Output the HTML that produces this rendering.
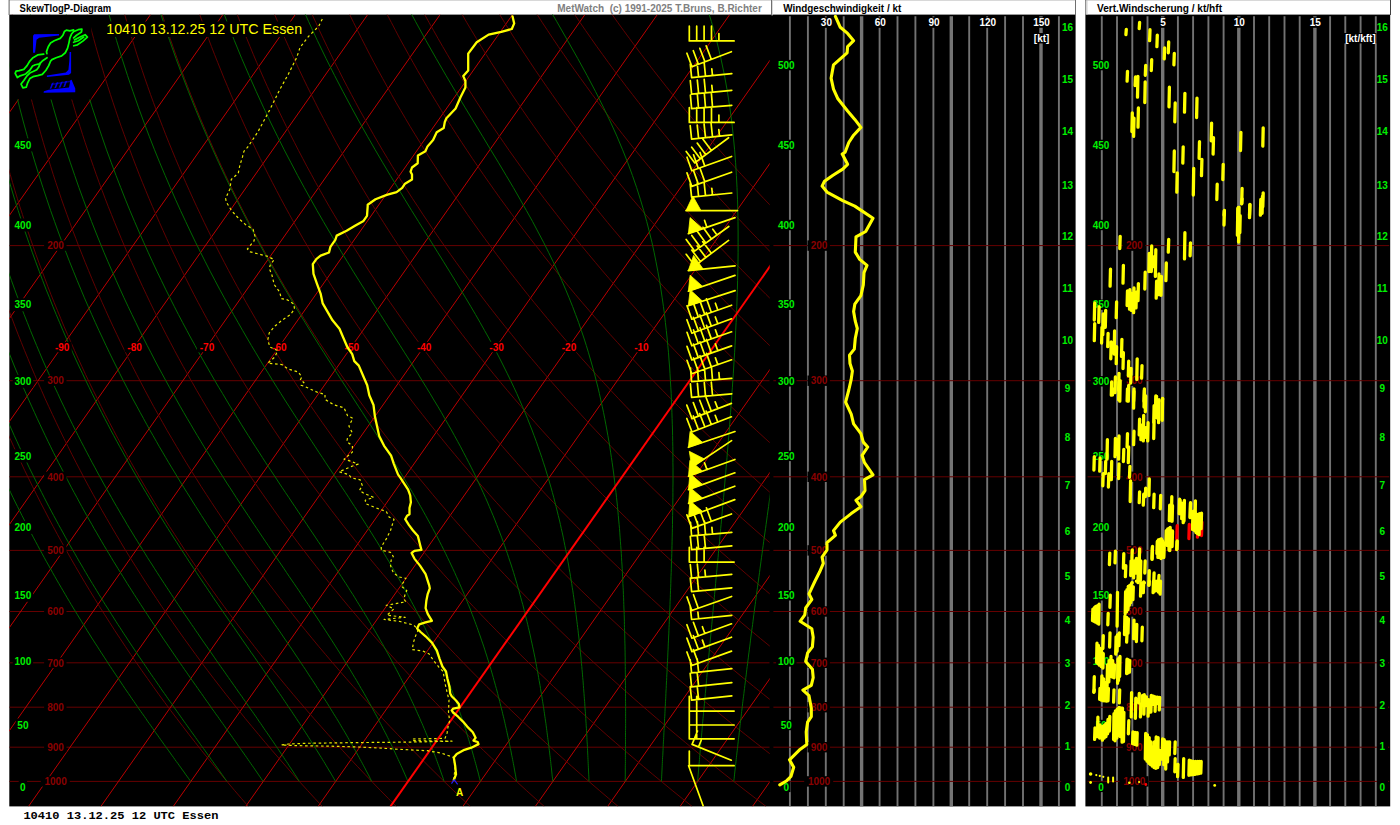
<!DOCTYPE html><html><head><meta charset="utf-8"><title>SkewTlogP-Diagram</title>
<style>html,body{margin:0;padding:0;background:#fff;overflow:hidden}svg{display:block}text{font-family:"Liberation Sans",sans-serif}.b{font-weight:bold}.g{fill:#00f000;font-weight:bold;font-size:10px}.w{fill:#fff;font-weight:bold;font-size:10px}.pl{fill:#8a0000;font-size:10px;font-weight:bold}.tl{fill:#ff0000;font-size:10px;font-weight:bold}.tt{fill:#000;font-weight:bold;font-size:10.2px}</style></head><body>
<svg width="1400" height="825" viewBox="0 0 1400 825">
<rect width="1400" height="825" fill="#fff"/>
<rect x="9.3" y="14.6" width="1066.3" height="791.8" fill="#000"/>
<rect x="1085.4" y="14.6" width="304.8" height="791.8" fill="#000"/>
<rect x="9" y="0" width="1067" height="1" fill="#d8d8d8"/>
<rect x="1085" y="0" width="306" height="1" fill="#d8d8d8"/>
<rect x="8.6" y="0" width="1" height="15" fill="#606060"/>
<rect x="771" y="0" width="1" height="15.4" fill="#707070"/>
<rect x="772" y="0" width="0.8" height="15.4" fill="#d0d0d0"/>
<rect x="1075" y="0" width="1" height="15" fill="#707070"/>
<rect x="1085.3" y="0" width="0.9" height="15" fill="#606060"/>
<rect x="1086.6" y="0" width="0.8" height="15" fill="#c0c0c0"/>
<rect x="1390" y="0" width="1" height="15" fill="#404040"/>
<text class="tt" x="19.6" y="12" textLength="91.5" lengthAdjust="spacingAndGlyphs">SkewTlogP-Diagram</text>
<text x="557.3" y="12" fill="#808080" font-weight="bold" font-size="10" textLength="204.5" lengthAdjust="spacingAndGlyphs">MetWatch&#160;&#160;(c) 1991-2025 T.Bruns, B.Richter</text>
<text class="tt" x="783.2" y="12" textLength="118" lengthAdjust="spacingAndGlyphs">Windgeschwindigkeit / kt</text>
<text class="tt" x="1097" y="12" textLength="125" lengthAdjust="spacingAndGlyphs">Vert.Windscherung / kt/hft</text>
<defs><clipPath id="c1"><path clip-rule="evenodd" d="M9.3 14.6H769.7V806.4H9.3Z M9 14H91.3V99.4H9Z M100 21.5H304V37H100Z"/></clipPath>
<clipPath id="c1b"><rect x="9.3" y="14.6" width="760.4" height="791.8"/></clipPath>
<clipPath id="c2"><rect x="769.7" y="14.6" width="305.9" height="791.8"/></clipPath>
<clipPath id="c3"><rect x="1085.4" y="14.6" width="304.8" height="791.8"/></clipPath></defs>
<g clip-path="url(#c1)" fill="none" stroke-width="1">
<path d="M9.3 245.6H769.7M9.3 380.7H769.7M9.3 476.8H769.7M9.3 550.4H769.7M9.3 611.5H769.7M9.3 662.8H769.7M9.3 707.2H769.7M9.3 747.2H769.7M9.3 781.4H769.7" stroke="#660000"/>
<path d="M-550.7 806.4L5.7 14.6M-478.3 806.4L78.1 14.6M-405.9 806.4L150.5 14.6M-333.5 806.4L222.9 14.6M-261.1 806.4L295.3 14.6M-188.7 806.4L367.7 14.6M-116.3 806.4L440.1 14.6M-43.9 806.4L512.5 14.6M28.5 806.4L584.9 14.6M100.9 806.4L657.3 14.6M173.3 806.4L729.7 14.6M245.7 806.4L802.1 14.6M318.1 806.4L874.5 14.6M462.9 806.4L1019.3 14.6M535.3 806.4L1091.7 14.6M607.7 806.4L1164.1 14.6M680.1 806.4L1236.5 14.6M752.5 806.4L1308.9 14.6" stroke="#bc0000"/>
<path d="M248.3 806.4 L241.4 798.4 L234.5 790.4 L227.8 782.4 L221.1 774.4 L214.5 766.4 L208 758.4 L201.5 750.4 L195.2 742.4 L188.9 734.4 L182.8 726.4 L176.7 718.4 L170.6 710.4 L164.7 702.4 L158.8 694.4 L153.1 686.4 L147.4 678.4 L141.7 670.4 L136.2 662.4 L130.7 654.4 L125.3 646.4 L120 638.4 L114.7 630.4 L109.6 622.4 L104.5 614.4 L99.4 606.4 L94.5 598.4 L89.6 590.4 L84.8 582.4 L80.1 574.4 L75.4 566.4 L70.8 558.4 L66.3 550.4 L61.8 542.4 L57.4 534.4 L53.1 526.4 L48.8 518.4 L44.7 510.4 L40.5 502.4 L36.5 494.4 L32.5 486.4 L28.6 478.4 L24.7 470.4 L21 462.4 L17.2 454.4 L13.6 446.4 L10 438.4 L6.4 430.4 L3 422.4 L-0.4 414.4 L-3.8 406.4 L-7.1 398.4 L-10.3 390.4 L-13.5 382.4 L-16.6 374.4 L-19.6 366.4 L-22.6 358.4 L-25.5 350.4 L-28.4 342.4 L-31.2 334.4 L-34 326.4 L-36.7 318.4 L-39.3 310.4 L-41.9 302.4 L-44.4 294.4 L-46.9 286.4 L-49.3 278.4 L-51.6 270.4 L-53.9 262.4 L-56.2 254.4 L-58.4 246.4 L-60.5 238.4 L-62.6 230.4 L-64.7 222.4 L-66.7 214.4 L-68.6 206.4 L-70.5 198.4 L-72.3 190.4 L-74.1 182.4 L-75.8 174.4 L-77.5 166.4 L-79.1 158.4 L-80.7 150.4 L-82.2 142.4 L-83.7 134.4 L-85.1 126.4 L-86.5 118.4 L-87.8 110.4 L-89.1 102.4 L-90.4 94.4 L-91.6 86.4 L-92.7 78.4 L-93.8 70.4 L-94.9 62.4 L-95.9 54.4 L-96.8 46.4 L-97.8 38.4 L-98.6 30.4 L-99.5 22.4 L-100.3 14.4M322.3 806.4 L314.8 798.4 L307.5 790.4 L300.2 782.4 L293 774.4 L286 766.4 L279 758.4 L272 750.4 L265.2 742.4 L258.5 734.4 L251.8 726.4 L245.2 718.4 L238.8 710.4 L232.4 702.4 L226 694.4 L219.8 686.4 L213.6 678.4 L207.5 670.4 L201.5 662.4 L195.6 654.4 L189.8 646.4 L184 638.4 L178.3 630.4 L172.7 622.4 L167.2 614.4 L161.7 606.4 L156.4 598.4 L151.1 590.4 L145.8 582.4 L140.7 574.4 L135.6 566.4 L130.6 558.4 L125.6 550.4 L120.8 542.4 L116 534.4 L111.3 526.4 L106.6 518.4 L102 510.4 L97.5 502.4 L93.1 494.4 L88.7 486.4 L84.4 478.4 L80.2 470.4 L76 462.4 L71.9 454.4 L67.9 446.4 L63.9 438.4 L60 430.4 L56.2 422.4 L52.4 414.4 L48.7 406.4 L45 398.4 L41.5 390.4 L37.9 382.4 L34.5 374.4 L31.1 366.4 L27.8 358.4 L24.5 350.4 L21.3 342.4 L18.1 334.4 L15 326.4 L12 318.4 L9 310.4 L6.1 302.4 L3.3 294.4 L0.5 286.4 L-2.3 278.4 L-4.9 270.4 L-7.6 262.4 L-10.1 254.4 L-12.6 246.4 L-15.1 238.4 L-17.5 230.4 L-19.9 222.4 L-22.1 214.4 L-24.4 206.4 L-26.6 198.4 L-28.7 190.4 L-30.8 182.4 L-32.8 174.4 L-34.8 166.4 L-36.7 158.4 L-38.6 150.4 L-40.4 142.4 L-42.1 134.4 L-43.9 126.4 L-45.5 118.4 L-47.1 110.4 L-48.7 102.4 L-50.2 94.4 L-51.7 86.4 L-53.1 78.4 L-54.5 70.4 L-55.8 62.4 L-57.1 54.4 L-58.3 46.4 L-59.5 38.4 L-60.6 30.4 L-61.7 22.4 L-62.8 14.4M396.2 806.4 L388.3 798.4 L380.4 790.4 L372.7 782.4 L365 774.4 L357.4 766.4 L349.9 758.4 L342.5 750.4 L335.2 742.4 L328 734.4 L320.9 726.4 L313.8 718.4 L306.9 710.4 L300 702.4 L293.2 694.4 L286.5 686.4 L279.9 678.4 L273.4 670.4 L266.9 662.4 L260.5 654.4 L254.3 646.4 L248.1 638.4 L241.9 630.4 L235.9 622.4 L229.9 614.4 L224 606.4 L218.2 598.4 L212.5 590.4 L206.9 582.4 L201.3 574.4 L195.8 566.4 L190.4 558.4 L185 550.4 L179.8 542.4 L174.6 534.4 L169.4 526.4 L164.4 518.4 L159.4 510.4 L154.5 502.4 L149.7 494.4 L144.9 486.4 L140.2 478.4 L135.6 470.4 L131.1 462.4 L126.6 454.4 L122.2 446.4 L117.8 438.4 L113.6 430.4 L109.4 422.4 L105.2 414.4 L101.2 406.4 L97.2 398.4 L93.2 390.4 L89.3 382.4 L85.5 374.4 L81.8 366.4 L78.1 358.4 L74.5 350.4 L71 342.4 L67.5 334.4 L64 326.4 L60.7 318.4 L57.4 310.4 L54.1 302.4 L50.9 294.4 L47.8 286.4 L44.8 278.4 L41.8 270.4 L38.8 262.4 L35.9 254.4 L33.1 246.4 L30.3 238.4 L27.6 230.4 L25 222.4 L22.4 214.4 L19.8 206.4 L17.3 198.4 L14.9 190.4 L12.5 182.4 L10.2 174.4 L7.9 166.4 L5.7 158.4 L3.6 150.4 L1.5 142.4 L-0.6 134.4 L-2.6 126.4 L-4.5 118.4 L-6.4 110.4 L-8.3 102.4 L-10.1 94.4 L-11.8 86.4 L-13.5 78.4 L-15.2 70.4 L-16.7 62.4 L-18.3 54.4 L-19.8 46.4 L-21.2 38.4 L-22.6 30.4 L-24 22.4 L-25.3 14.4M470.2 806.4 L461.7 798.4 L453.4 790.4 L445.1 782.4 L437 774.4 L428.9 766.4 L420.9 758.4 L413 750.4 L405.2 742.4 L397.5 734.4 L389.9 726.4 L382.4 718.4 L375 710.4 L367.7 702.4 L360.4 694.4 L353.2 686.4 L346.2 678.4 L339.2 670.4 L332.3 662.4 L325.5 654.4 L318.7 646.4 L312.1 638.4 L305.5 630.4 L299 622.4 L292.7 614.4 L286.3 606.4 L280.1 598.4 L274 590.4 L267.9 582.4 L261.9 574.4 L256 566.4 L250.2 558.4 L244.4 550.4 L238.7 542.4 L233.1 534.4 L227.6 526.4 L222.2 518.4 L216.8 510.4 L211.5 502.4 L206.3 494.4 L201.1 486.4 L196.1 478.4 L191.1 470.4 L186.1 462.4 L181.3 454.4 L176.5 446.4 L171.8 438.4 L167.1 430.4 L162.6 422.4 L158.1 414.4 L153.6 406.4 L149.3 398.4 L145 390.4 L140.8 382.4 L136.6 374.4 L132.5 366.4 L128.5 358.4 L124.5 350.4 L120.6 342.4 L116.8 334.4 L113 326.4 L109.3 318.4 L105.7 310.4 L102.1 302.4 L98.6 294.4 L95.2 286.4 L91.8 278.4 L88.5 270.4 L85.2 262.4 L82 254.4 L78.8 246.4 L75.8 238.4 L72.7 230.4 L69.8 222.4 L66.9 214.4 L64 206.4 L61.2 198.4 L58.5 190.4 L55.8 182.4 L53.2 174.4 L50.7 166.4 L48.2 158.4 L45.7 150.4 L43.3 142.4 L41 134.4 L38.7 126.4 L36.5 118.4 L34.3 110.4 L32.2 102.4 L30.1 94.4 L28.1 86.4 L26.1 78.4 L24.2 70.4 L22.3 62.4 L20.5 54.4 L18.8 46.4 L17 38.4 L15.4 30.4 L13.8 22.4 L12.2 14.4M544.2 806.4 L535.2 798.4 L526.3 790.4 L517.6 782.4 L508.9 774.4 L500.4 766.4 L491.9 758.4 L483.5 750.4 L475.3 742.4 L467.1 734.4 L459 726.4 L451 718.4 L443.1 710.4 L435.3 702.4 L427.6 694.4 L420 686.4 L412.4 678.4 L405 670.4 L397.6 662.4 L390.4 654.4 L383.2 646.4 L376.1 638.4 L369.1 630.4 L362.2 622.4 L355.4 614.4 L348.6 606.4 L342 598.4 L335.4 590.4 L328.9 582.4 L322.5 574.4 L316.2 566.4 L309.9 558.4 L303.8 550.4 L297.7 542.4 L291.7 534.4 L285.8 526.4 L279.9 518.4 L274.2 510.4 L268.5 502.4 L262.9 494.4 L257.3 486.4 L251.9 478.4 L246.5 470.4 L241.2 462.4 L236 454.4 L230.8 446.4 L225.7 438.4 L220.7 430.4 L215.8 422.4 L210.9 414.4 L206.1 406.4 L201.4 398.4 L196.7 390.4 L192.2 382.4 L187.7 374.4 L183.2 366.4 L178.8 358.4 L174.5 350.4 L170.3 342.4 L166.1 334.4 L162 326.4 L158 318.4 L154 310.4 L150.1 302.4 L146.3 294.4 L142.5 286.4 L138.8 278.4 L135.2 270.4 L131.6 262.4 L128 254.4 L124.6 246.4 L121.2 238.4 L117.9 230.4 L114.6 222.4 L111.4 214.4 L108.2 206.4 L105.1 198.4 L102.1 190.4 L99.1 182.4 L96.2 174.4 L93.4 166.4 L90.6 158.4 L87.8 150.4 L85.1 142.4 L82.5 134.4 L80 126.4 L77.4 118.4 L75 110.4 L72.6 102.4 L70.2 94.4 L67.9 86.4 L65.7 78.4 L63.5 70.4 L61.4 62.4 L59.3 54.4 L57.3 46.4 L55.3 38.4 L53.4 30.4 L51.5 22.4 L49.7 14.4M618.1 806.4 L608.7 798.4 L599.3 790.4 L590 782.4 L580.9 774.4 L571.8 766.4 L562.9 758.4 L554 750.4 L545.3 742.4 L536.6 734.4 L528 726.4 L519.6 718.4 L511.2 710.4 L503 702.4 L494.8 694.4 L486.7 686.4 L478.7 678.4 L470.8 670.4 L463 662.4 L455.3 654.4 L447.7 646.4 L440.2 638.4 L432.7 630.4 L425.4 622.4 L418.1 614.4 L410.9 606.4 L403.9 598.4 L396.9 590.4 L389.9 582.4 L383.1 574.4 L376.4 566.4 L369.7 558.4 L363.2 550.4 L356.7 542.4 L350.3 534.4 L343.9 526.4 L337.7 518.4 L331.5 510.4 L325.5 502.4 L319.5 494.4 L313.5 486.4 L307.7 478.4 L301.9 470.4 L296.3 462.4 L290.6 454.4 L285.1 446.4 L279.7 438.4 L274.3 430.4 L269 422.4 L263.8 414.4 L258.6 406.4 L253.5 398.4 L248.5 390.4 L243.6 382.4 L238.7 374.4 L233.9 366.4 L229.2 358.4 L224.6 350.4 L220 342.4 L215.5 334.4 L211 326.4 L206.7 318.4 L202.4 310.4 L198.1 302.4 L193.9 294.4 L189.8 286.4 L185.8 278.4 L181.8 270.4 L177.9 262.4 L174.1 254.4 L170.3 246.4 L166.6 238.4 L163 230.4 L159.4 222.4 L155.9 214.4 L152.4 206.4 L149 198.4 L145.7 190.4 L142.4 182.4 L139.2 174.4 L136.1 166.4 L133 158.4 L130 150.4 L127 142.4 L124.1 134.4 L121.2 126.4 L118.4 118.4 L115.7 110.4 L113 102.4 L110.4 94.4 L107.8 86.4 L105.3 78.4 L102.9 70.4 L100.5 62.4 L98.1 54.4 L95.8 46.4 L93.6 38.4 L91.4 30.4 L89.3 22.4 L87.2 14.4M692.1 806.4 L682.1 798.4 L672.2 790.4 L662.5 782.4 L652.8 774.4 L643.3 766.4 L633.9 758.4 L624.5 750.4 L615.3 742.4 L606.1 734.4 L597.1 726.4 L588.2 718.4 L579.3 710.4 L570.6 702.4 L562 694.4 L553.4 686.4 L545 678.4 L536.6 670.4 L528.4 662.4 L520.2 654.4 L512.2 646.4 L504.2 638.4 L496.3 630.4 L488.5 622.4 L480.8 614.4 L473.2 606.4 L465.7 598.4 L458.3 590.4 L451 582.4 L443.7 574.4 L436.6 566.4 L429.5 558.4 L422.5 550.4 L415.6 542.4 L408.8 534.4 L402.1 526.4 L395.5 518.4 L388.9 510.4 L382.4 502.4 L376.1 494.4 L369.7 486.4 L363.5 478.4 L357.4 470.4 L351.3 462.4 L345.3 454.4 L339.4 446.4 L333.6 438.4 L327.9 430.4 L322.2 422.4 L316.6 414.4 L311.1 406.4 L305.6 398.4 L300.3 390.4 L295 382.4 L289.8 374.4 L284.6 366.4 L279.6 358.4 L274.6 350.4 L269.6 342.4 L264.8 334.4 L260 326.4 L255.3 318.4 L250.7 310.4 L246.1 302.4 L241.6 294.4 L237.2 286.4 L232.8 278.4 L228.5 270.4 L224.3 262.4 L220.2 254.4 L216.1 246.4 L212.1 238.4 L208.1 230.4 L204.2 222.4 L200.4 214.4 L196.6 206.4 L192.9 198.4 L189.3 190.4 L185.7 182.4 L182.2 174.4 L178.8 166.4 L175.4 158.4 L172.1 150.4 L168.8 142.4 L165.6 134.4 L162.5 126.4 L159.4 118.4 L156.4 110.4 L153.4 102.4 L150.5 94.4 L147.7 86.4 L144.9 78.4 L142.2 70.4 L139.5 62.4 L136.9 54.4 L134.4 46.4 L131.9 38.4 L129.4 30.4 L127 22.4 L124.7 14.4M766 806.4 L755.6 798.4 L745.2 790.4 L734.9 782.4 L724.8 774.4 L714.8 766.4 L704.8 758.4 L695 750.4 L685.3 742.4 L675.7 734.4 L666.2 726.4 L656.8 718.4 L647.5 710.4 L638.3 702.4 L629.2 694.4 L620.2 686.4 L611.3 678.4 L602.5 670.4 L593.7 662.4 L585.1 654.4 L576.6 646.4 L568.2 638.4 L559.9 630.4 L551.7 622.4 L543.6 614.4 L535.5 606.4 L527.6 598.4 L519.8 590.4 L512 582.4 L504.4 574.4 L496.8 566.4 L489.3 558.4 L481.9 550.4 L474.6 542.4 L467.4 534.4 L460.3 526.4 L453.2 518.4 L446.3 510.4 L439.4 502.4 L432.6 494.4 L426 486.4 L419.3 478.4 L412.8 470.4 L406.4 462.4 L400 454.4 L393.7 446.4 L387.5 438.4 L381.4 430.4 L375.4 422.4 L369.4 414.4 L363.6 406.4 L357.8 398.4 L352 390.4 L346.4 382.4 L340.8 374.4 L335.3 366.4 L329.9 358.4 L324.6 350.4 L319.3 342.4 L314.1 334.4 L309 326.4 L304 318.4 L299 310.4 L294.1 302.4 L289.3 294.4 L284.5 286.4 L279.9 278.4 L275.2 270.4 L270.7 262.4 L266.2 254.4 L261.8 246.4 L257.5 238.4 L253.2 230.4 L249 222.4 L244.9 214.4 L240.8 206.4 L236.8 198.4 L232.9 190.4 L229 182.4 L225.2 174.4 L221.5 166.4 L217.8 158.4 L214.2 150.4 L210.7 142.4 L207.2 134.4 L203.8 126.4 L200.4 118.4 L197.1 110.4 L193.9 102.4 L190.7 94.4 L187.6 86.4 L184.5 78.4 L181.5 70.4 L178.6 62.4 L175.7 54.4 L172.9 46.4 L170.1 38.4 L167.4 30.4 L164.8 22.4 L162.2 14.4M840 806.4 L829 798.4 L818.2 790.4 L807.4 782.4 L796.8 774.4 L786.2 766.4 L775.8 758.4 L765.5 750.4 L755.3 742.4 L745.2 734.4 L735.2 726.4 L725.3 718.4 L715.6 710.4 L705.9 702.4 L696.3 694.4 L686.9 686.4 L677.5 678.4 L668.3 670.4 L659.1 662.4 L650.1 654.4 L641.1 646.4 L632.3 638.4 L623.5 630.4 L614.9 622.4 L606.3 614.4 L597.8 606.4 L589.5 598.4 L581.2 590.4 L573 582.4 L565 574.4 L557 566.4 L549.1 558.4 L541.3 550.4 L533.6 542.4 L526 534.4 L518.4 526.4 L511 518.4 L503.7 510.4 L496.4 502.4 L489.2 494.4 L482.2 486.4 L475.2 478.4 L468.3 470.4 L461.4 462.4 L454.7 454.4 L448 446.4 L441.5 438.4 L435 430.4 L428.6 422.4 L422.3 414.4 L416 406.4 L409.9 398.4 L403.8 390.4 L397.8 382.4 L391.9 374.4 L386 366.4 L380.3 358.4 L374.6 350.4 L369 342.4 L363.5 334.4 L358 326.4 L352.6 318.4 L347.3 310.4 L342.1 302.4 L337 294.4 L331.9 286.4 L326.9 278.4 L321.9 270.4 L317.1 262.4 L312.3 254.4 L307.6 246.4 L302.9 238.4 L298.4 230.4 L293.8 222.4 L289.4 214.4 L285 206.4 L280.7 198.4 L276.5 190.4 L272.3 182.4 L268.2 174.4 L264.2 166.4 L260.2 158.4 L256.3 150.4 L252.5 142.4 L248.7 134.4 L245 126.4 L241.4 118.4 L237.8 110.4 L234.3 102.4 L230.8 94.4 L227.5 86.4 L224.1 78.4 L220.9 70.4 L217.7 62.4 L214.5 54.4 L211.4 46.4 L208.4 38.4 L205.4 30.4 L202.5 22.4 L199.7 14.4M914 806.4 L902.5 798.4 L891.1 790.4 L879.9 782.4 L868.7 774.4 L857.7 766.4 L846.8 758.4 L836 750.4 L825.3 742.4 L814.7 734.4 L804.3 726.4 L793.9 718.4 L783.7 710.4 L773.5 702.4 L763.5 694.4 L753.6 686.4 L743.8 678.4 L734.1 670.4 L724.5 662.4 L715 654.4 L705.6 646.4 L696.3 638.4 L687.1 630.4 L678 622.4 L669 614.4 L660.1 606.4 L651.4 598.4 L642.7 590.4 L634.1 582.4 L625.6 574.4 L617.2 566.4 L608.9 558.4 L600.7 550.4 L592.6 542.4 L584.5 534.4 L576.6 526.4 L568.8 518.4 L561 510.4 L553.4 502.4 L545.8 494.4 L538.4 486.4 L531 478.4 L523.7 470.4 L516.5 462.4 L509.4 454.4 L502.4 446.4 L495.4 438.4 L488.6 430.4 L481.8 422.4 L475.1 414.4 L468.5 406.4 L462 398.4 L455.6 390.4 L449.2 382.4 L442.9 374.4 L436.7 366.4 L430.6 358.4 L424.6 350.4 L418.7 342.4 L412.8 334.4 L407 326.4 L401.3 318.4 L395.7 310.4 L390.1 302.4 L384.6 294.4 L379.2 286.4 L373.9 278.4 L368.6 270.4 L363.5 262.4 L358.4 254.4 L353.3 246.4 L348.4 238.4 L343.5 230.4 L338.7 222.4 L333.9 214.4 L329.2 206.4 L324.6 198.4 L320.1 190.4 L315.6 182.4 L311.3 174.4 L306.9 166.4 L302.7 158.4 L298.5 150.4 L294.4 142.4 L290.3 134.4 L286.3 126.4 L282.4 118.4 L278.5 110.4 L274.7 102.4 L271 94.4 L267.3 86.4 L263.7 78.4 L260.2 70.4 L256.7 62.4 L253.3 54.4 L250 46.4 L246.7 38.4 L243.4 30.4 L240.3 22.4 L237.2 14.4M987.9 806.4 L975.9 798.4 L964.1 790.4 L952.3 782.4 L940.7 774.4 L929.2 766.4 L917.8 758.4 L906.5 750.4 L895.3 742.4 L884.3 734.4 L873.3 726.4 L862.5 718.4 L851.8 710.4 L841.2 702.4 L830.7 694.4 L820.3 686.4 L810.1 678.4 L799.9 670.4 L789.9 662.4 L779.9 654.4 L770.1 646.4 L760.3 638.4 L750.7 630.4 L741.2 622.4 L731.8 614.4 L722.4 606.4 L713.2 598.4 L704.1 590.4 L695.1 582.4 L686.2 574.4 L677.4 566.4 L668.7 558.4 L660.1 550.4 L651.5 542.4 L643.1 534.4 L634.8 526.4 L626.6 518.4 L618.4 510.4 L610.4 502.4 L602.4 494.4 L594.6 486.4 L586.8 478.4 L579.1 470.4 L571.6 462.4 L564.1 454.4 L556.7 446.4 L549.4 438.4 L542.1 430.4 L535 422.4 L527.9 414.4 L521 406.4 L514.1 398.4 L507.3 390.4 L500.6 382.4 L494 374.4 L487.5 366.4 L481 358.4 L474.6 350.4 L468.3 342.4 L462.1 334.4 L456 326.4 L450 318.4 L444 310.4 L438.1 302.4 L432.3 294.4 L426.6 286.4 L420.9 278.4 L415.3 270.4 L409.8 262.4 L404.4 254.4 L399.1 246.4 L393.8 238.4 L388.6 230.4 L383.5 222.4 L378.4 214.4 L373.4 206.4 L368.5 198.4 L363.7 190.4 L358.9 182.4 L354.3 174.4 L349.6 166.4 L345.1 158.4 L340.6 150.4 L336.2 142.4 L331.9 134.4 L327.6 126.4 L323.4 118.4 L319.2 110.4 L315.2 102.4 L311.2 94.4 L307.2 86.4 L303.3 78.4 L299.5 70.4 L295.8 62.4 L292.1 54.4 L288.5 46.4 L284.9 38.4 L281.4 30.4 L278 22.4 L274.6 14.4M1061.9 806.4 L1049.4 798.4 L1037 790.4 L1024.8 782.4 L1012.6 774.4 L1000.6 766.4 L988.7 758.4 L977 750.4 L965.3 742.4 L953.8 734.4 L942.4 726.4 L931.1 718.4 L919.9 710.4 L908.8 702.4 L897.9 694.4 L887.1 686.4 L876.3 678.4 L865.7 670.4 L855.2 662.4 L844.8 654.4 L834.5 646.4 L824.4 638.4 L814.3 630.4 L804.3 622.4 L794.5 614.4 L784.7 606.4 L775.1 598.4 L765.6 590.4 L756.1 582.4 L746.8 574.4 L737.6 566.4 L728.5 558.4 L719.4 550.4 L710.5 542.4 L701.7 534.4 L693 526.4 L684.3 518.4 L675.8 510.4 L667.4 502.4 L659 494.4 L650.8 486.4 L642.6 478.4 L634.6 470.4 L626.6 462.4 L618.7 454.4 L611 446.4 L603.3 438.4 L595.7 430.4 L588.2 422.4 L580.8 414.4 L573.5 406.4 L566.2 398.4 L559.1 390.4 L552 382.4 L545 374.4 L538.2 366.4 L531.4 358.4 L524.6 350.4 L518 342.4 L511.5 334.4 L505 326.4 L498.6 318.4 L492.3 310.4 L486.1 302.4 L480 294.4 L473.9 286.4 L467.9 278.4 L462 270.4 L456.2 262.4 L450.5 254.4 L444.8 246.4 L439.2 238.4 L433.7 230.4 L428.3 222.4 L422.9 214.4 L417.7 206.4 L412.4 198.4 L407.3 190.4 L402.3 182.4 L397.3 174.4 L392.3 166.4 L387.5 158.4 L382.7 150.4 L378 142.4 L373.4 134.4 L368.9 126.4 L364.4 118.4 L359.9 110.4 L355.6 102.4 L351.3 94.4 L347.1 86.4 L342.9 78.4 L338.9 70.4 L334.8 62.4 L330.9 54.4 L327 46.4 L323.2 38.4 L319.4 30.4 L315.8 22.4 L312.1 14.4M1135.9 806.4 L1122.9 798.4 L1110 790.4 L1097.2 782.4 L1084.6 774.4 L1072.1 766.4 L1059.7 758.4 L1047.5 750.4 L1035.3 742.4 L1023.3 734.4 L1011.4 726.4 L999.7 718.4 L988 710.4 L976.5 702.4 L965.1 694.4 L953.8 686.4 L942.6 678.4 L931.5 670.4 L920.6 662.4 L909.7 654.4 L899 646.4 L888.4 638.4 L877.9 630.4 L867.5 622.4 L857.2 614.4 L847 606.4 L837 598.4 L827 590.4 L817.2 582.4 L807.4 574.4 L797.8 566.4 L788.2 558.4 L778.8 550.4 L769.5 542.4 L760.2 534.4 L751.1 526.4 L742.1 518.4 L733.2 510.4 L724.3 502.4 L715.6 494.4 L707 486.4 L698.5 478.4 L690 470.4 L681.7 462.4 L673.4 454.4 L665.3 446.4 L657.2 438.4 L649.3 430.4 L641.4 422.4 L633.6 414.4 L625.9 406.4 L618.3 398.4 L610.8 390.4 L603.4 382.4 L596.1 374.4 L588.9 366.4 L581.7 358.4 L574.7 350.4 L567.7 342.4 L560.8 334.4 L554 326.4 L547.3 318.4 L540.7 310.4 L534.1 302.4 L527.6 294.4 L521.3 286.4 L515 278.4 L508.7 270.4 L502.6 262.4 L496.5 254.4 L490.6 246.4 L484.7 238.4 L478.8 230.4 L473.1 222.4 L467.4 214.4 L461.9 206.4 L456.3 198.4 L450.9 190.4 L445.6 182.4 L440.3 174.4 L435.1 166.4 L429.9 158.4 L424.9 150.4 L419.9 142.4 L415 134.4 L410.1 126.4 L405.4 118.4 L400.7 110.4 L396 102.4 L391.5 94.4 L387 86.4 L382.6 78.4 L378.2 70.4 L373.9 62.4 L369.7 54.4 L365.6 46.4 L361.5 38.4 L357.5 30.4 L353.5 22.4 L349.6 14.4M1209.8 806.4 L1196.3 798.4 L1182.9 790.4 L1169.7 782.4 L1156.6 774.4 L1143.6 766.4 L1130.7 758.4 L1118 750.4 L1105.4 742.4 L1092.9 734.4 L1080.5 726.4 L1068.3 718.4 L1056.1 710.4 L1044.1 702.4 L1032.3 694.4 L1020.5 686.4 L1008.9 678.4 L997.4 670.4 L986 662.4 L974.7 654.4 L963.5 646.4 L952.4 638.4 L941.5 630.4 L930.7 622.4 L920 614.4 L909.3 606.4 L898.9 598.4 L888.5 590.4 L878.2 582.4 L868 574.4 L858 566.4 L848 558.4 L838.2 550.4 L828.4 542.4 L818.8 534.4 L809.3 526.4 L799.9 518.4 L790.5 510.4 L781.3 502.4 L772.2 494.4 L763.2 486.4 L754.3 478.4 L745.5 470.4 L736.7 462.4 L728.1 454.4 L719.6 446.4 L711.2 438.4 L702.8 430.4 L694.6 422.4 L686.5 414.4 L678.4 406.4 L670.5 398.4 L662.6 390.4 L654.8 382.4 L647.2 374.4 L639.6 366.4 L632.1 358.4 L624.7 350.4 L617.4 342.4 L610.1 334.4 L603 326.4 L595.9 318.4 L589 310.4 L582.1 302.4 L575.3 294.4 L568.6 286.4 L562 278.4 L555.4 270.4 L549 262.4 L542.6 254.4 L536.3 246.4 L530.1 238.4 L524 230.4 L517.9 222.4 L511.9 214.4 L506.1 206.4 L500.2 198.4 L494.5 190.4 L488.9 182.4 L483.3 174.4 L477.8 166.4 L472.3 158.4 L467 150.4 L461.7 142.4 L456.5 134.4 L451.4 126.4 L446.3 118.4 L441.4 110.4 L436.5 102.4 L431.6 94.4 L426.8 86.4 L422.2 78.4 L417.5 70.4 L413 62.4 L408.5 54.4 L404.1 46.4 L399.7 38.4 L395.5 30.4 L391.3 22.4 L387.1 14.4M1283.8 806.4 L1269.8 798.4 L1255.9 790.4 L1242.1 782.4 L1228.5 774.4 L1215 766.4 L1201.7 758.4 L1188.5 750.4 L1175.4 742.4 L1162.4 734.4 L1149.6 726.4 L1136.8 718.4 L1124.3 710.4 L1111.8 702.4 L1099.5 694.4 L1087.2 686.4 L1075.1 678.4 L1063.2 670.4 L1051.3 662.4 L1039.6 654.4 L1028 646.4 L1016.5 638.4 L1005.1 630.4 L993.8 622.4 L982.7 614.4 L971.7 606.4 L960.7 598.4 L949.9 590.4 L939.2 582.4 L928.6 574.4 L918.2 566.4 L907.8 558.4 L897.6 550.4 L887.4 542.4 L877.4 534.4 L867.5 526.4 L857.6 518.4 L847.9 510.4 L838.3 502.4 L828.8 494.4 L819.4 486.4 L810.1 478.4 L800.9 470.4 L791.8 462.4 L782.8 454.4 L773.9 446.4 L765.1 438.4 L756.4 430.4 L747.8 422.4 L739.3 414.4 L730.9 406.4 L722.6 398.4 L714.4 390.4 L706.2 382.4 L698.2 374.4 L690.3 366.4 L682.4 358.4 L674.7 350.4 L667 342.4 L659.5 334.4 L652 326.4 L644.6 318.4 L637.3 310.4 L630.1 302.4 L623 294.4 L615.9 286.4 L609 278.4 L602.1 270.4 L595.4 262.4 L588.7 254.4 L582.1 246.4 L575.5 238.4 L569.1 230.4 L562.7 222.4 L556.5 214.4 L550.3 206.4 L544.1 198.4 L538.1 190.4 L532.2 182.4 L526.3 174.4 L520.5 166.4 L514.8 158.4 L509.1 150.4 L503.6 142.4 L498.1 134.4 L492.7 126.4 L487.3 118.4 L482.1 110.4 L476.9 102.4 L471.8 94.4 L466.7 86.4 L461.8 78.4 L456.9 70.4 L452 62.4 L447.3 54.4 L442.6 46.4 L438 38.4 L433.5 30.4 L429 22.4 L424.6 14.4M1357.7 806.4 L1343.2 798.4 L1328.8 790.4 L1314.6 782.4 L1300.5 774.4 L1286.5 766.4 L1272.7 758.4 L1259 750.4 L1245.4 742.4 L1231.9 734.4 L1218.6 726.4 L1205.4 718.4 L1192.4 710.4 L1179.4 702.4 L1166.6 694.4 L1154 686.4 L1141.4 678.4 L1129 670.4 L1116.7 662.4 L1104.5 654.4 L1092.4 646.4 L1080.5 638.4 L1068.7 630.4 L1057 622.4 L1045.4 614.4 L1034 606.4 L1022.6 598.4 L1011.4 590.4 L1000.3 582.4 L989.3 574.4 L978.4 566.4 L967.6 558.4 L956.9 550.4 L946.4 542.4 L936 534.4 L925.6 526.4 L915.4 518.4 L905.3 510.4 L895.3 502.4 L885.4 494.4 L875.6 486.4 L865.9 478.4 L856.3 470.4 L846.9 462.4 L837.5 454.4 L828.2 446.4 L819 438.4 L810 430.4 L801 422.4 L792.1 414.4 L783.4 406.4 L774.7 398.4 L766.1 390.4 L757.7 382.4 L749.3 374.4 L741 366.4 L732.8 358.4 L724.7 350.4 L716.7 342.4 L708.8 334.4 L701 326.4 L693.3 318.4 L685.6 310.4 L678.1 302.4 L670.6 294.4 L663.3 286.4 L656 278.4 L648.8 270.4 L641.7 262.4 L634.7 254.4 L627.8 246.4 L621 238.4 L614.2 230.4 L607.5 222.4 L601 214.4 L594.5 206.4 L588 198.4 L581.7 190.4 L575.5 182.4 L569.3 174.4 L563.2 166.4 L557.2 158.4 L551.3 150.4 L545.4 142.4 L539.6 134.4 L533.9 126.4 L528.3 118.4 L522.8 110.4 L517.3 102.4 L511.9 94.4 L506.6 86.4 L501.4 78.4 L496.2 70.4 L491.1 62.4 L486.1 54.4 L481.1 46.4 L476.3 38.4 L471.5 30.4 L466.7 22.4 L462.1 14.4M1431.7 806.4 L1416.7 798.4 L1401.8 790.4 L1387.1 782.4 L1372.4 774.4 L1358 766.4 L1343.6 758.4 L1329.4 750.4 L1315.4 742.4 L1301.5 734.4 L1287.7 726.4 L1274 718.4 L1260.5 710.4 L1247.1 702.4 L1233.8 694.4 L1220.7 686.4 L1207.7 678.4 L1194.8 670.4 L1182.1 662.4 L1169.4 654.4 L1156.9 646.4 L1144.5 638.4 L1132.3 630.4 L1120.2 622.4 L1108.1 614.4 L1096.3 606.4 L1084.5 598.4 L1072.8 590.4 L1061.3 582.4 L1049.9 574.4 L1038.6 566.4 L1027.4 558.4 L1016.3 550.4 L1005.4 542.4 L994.5 534.4 L983.8 526.4 L973.2 518.4 L962.7 510.4 L952.3 502.4 L942 494.4 L931.8 486.4 L921.7 478.4 L911.8 470.4 L901.9 462.4 L892.2 454.4 L882.5 446.4 L873 438.4 L863.5 430.4 L854.2 422.4 L845 414.4 L835.8 406.4 L826.8 398.4 L817.9 390.4 L809.1 382.4 L800.3 374.4 L791.7 366.4 L783.2 358.4 L774.7 350.4 L766.4 342.4 L758.1 334.4 L750 326.4 L741.9 318.4 L734 310.4 L726.1 302.4 L718.3 294.4 L710.6 286.4 L703 278.4 L695.5 270.4 L688.1 262.4 L680.8 254.4 L673.5 246.4 L666.4 238.4 L659.3 230.4 L652.4 222.4 L645.5 214.4 L638.7 206.4 L631.9 198.4 L625.3 190.4 L618.8 182.4 L612.3 174.4 L605.9 166.4 L599.6 158.4 L593.4 150.4 L587.2 142.4 L581.2 134.4 L575.2 126.4 L569.3 118.4 L563.5 110.4 L557.7 102.4 L552.1 94.4 L546.5 86.4 L541 78.4 L535.5 70.4 L530.2 62.4 L524.9 54.4 L519.7 46.4 L514.5 38.4 L509.5 30.4 L504.5 22.4 L499.6 14.4M1505.7 806.4 L1490.1 798.4 L1474.8 790.4 L1459.5 782.4 L1444.4 774.4 L1429.4 766.4 L1414.6 758.4 L1399.9 750.4 L1385.4 742.4 L1371 734.4 L1356.7 726.4 L1342.6 718.4 L1328.6 710.4 L1314.7 702.4 L1301 694.4 L1287.4 686.4 L1274 678.4 L1260.6 670.4 L1247.4 662.4 L1234.3 654.4 L1221.4 646.4 L1208.6 638.4 L1195.9 630.4 L1183.3 622.4 L1170.9 614.4 L1158.6 606.4 L1146.4 598.4 L1134.3 590.4 L1122.3 582.4 L1110.5 574.4 L1098.8 566.4 L1087.2 558.4 L1075.7 550.4 L1064.3 542.4 L1053.1 534.4 L1042 526.4 L1030.9 518.4 L1020 510.4 L1009.3 502.4 L998.6 494.4 L988 486.4 L977.6 478.4 L967.2 470.4 L957 462.4 L946.9 454.4 L936.8 446.4 L926.9 438.4 L917.1 430.4 L907.4 422.4 L897.8 414.4 L888.3 406.4 L878.9 398.4 L869.7 390.4 L860.5 382.4 L851.4 374.4 L842.4 366.4 L833.5 358.4 L824.7 350.4 L816.1 342.4 L807.5 334.4 L799 326.4 L790.6 318.4 L782.3 310.4 L774.1 302.4 L766 294.4 L758 286.4 L750.1 278.4 L742.2 270.4 L734.5 262.4 L726.8 254.4 L719.3 246.4 L711.8 238.4 L704.5 230.4 L697.2 222.4 L690 214.4 L682.9 206.4 L675.8 198.4 L668.9 190.4 L662.1 182.4 L655.3 174.4 L648.6 166.4 L642 158.4 L635.5 150.4 L629.1 142.4 L622.7 134.4 L616.5 126.4 L610.3 118.4 L604.2 110.4 L598.2 102.4 L592.2 94.4 L586.4 86.4 L580.6 78.4 L574.9 70.4 L569.2 62.4 L563.7 54.4 L558.2 46.4 L552.8 38.4 L547.5 30.4 L542.2 22.4 L537.1 14.4M1579.6 806.4 L1563.6 798.4 L1547.7 790.4 L1532 782.4 L1516.4 774.4 L1500.9 766.4 L1485.6 758.4 L1470.4 750.4 L1455.4 742.4 L1440.5 734.4 L1425.8 726.4 L1411.2 718.4 L1396.7 710.4 L1382.4 702.4 L1368.2 694.4 L1354.2 686.4 L1340.2 678.4 L1326.4 670.4 L1312.8 662.4 L1299.3 654.4 L1285.9 646.4 L1272.6 638.4 L1259.5 630.4 L1246.5 622.4 L1233.6 614.4 L1220.9 606.4 L1208.2 598.4 L1195.7 590.4 L1183.4 582.4 L1171.1 574.4 L1159 566.4 L1147 558.4 L1135.1 550.4 L1123.3 542.4 L1111.7 534.4 L1100.1 526.4 L1088.7 518.4 L1077.4 510.4 L1066.2 502.4 L1055.2 494.4 L1044.2 486.4 L1033.4 478.4 L1022.7 470.4 L1012 462.4 L1001.5 454.4 L991.1 446.4 L980.9 438.4 L970.7 430.4 L960.6 422.4 L950.7 414.4 L940.8 406.4 L931.1 398.4 L921.4 390.4 L911.9 382.4 L902.4 374.4 L893.1 366.4 L883.9 358.4 L874.8 350.4 L865.7 342.4 L856.8 334.4 L848 326.4 L839.3 318.4 L830.6 310.4 L822.1 302.4 L813.7 294.4 L805.3 286.4 L797.1 278.4 L788.9 270.4 L780.9 262.4 L772.9 254.4 L765 246.4 L757.3 238.4 L749.6 230.4 L742 222.4 L734.5 214.4 L727.1 206.4 L719.7 198.4 L712.5 190.4 L705.4 182.4 L698.3 174.4 L691.3 166.4 L684.4 158.4 L677.6 150.4 L670.9 142.4 L664.3 134.4 L657.7 126.4 L651.3 118.4 L644.9 110.4 L638.6 102.4 L632.4 94.4 L626.2 86.4 L620.2 78.4 L614.2 70.4 L608.3 62.4 L602.5 54.4 L596.7 46.4 L591.1 38.4 L585.5 30.4 L580 22.4 L574.6 14.4M1653.6 806.4 L1637.1 798.4 L1620.7 790.4 L1604.4 782.4 L1588.3 774.4 L1572.4 766.4 L1556.6 758.4 L1540.9 750.4 L1525.4 742.4 L1510.1 734.4 L1494.8 726.4 L1479.8 718.4 L1464.8 710.4 L1450 702.4 L1435.4 694.4 L1420.9 686.4 L1406.5 678.4 L1392.3 670.4 L1378.2 662.4 L1364.2 654.4 L1350.4 646.4 L1336.7 638.4 L1323.1 630.4 L1309.6 622.4 L1296.3 614.4 L1283.2 606.4 L1270.1 598.4 L1257.2 590.4 L1244.4 582.4 L1231.7 574.4 L1219.2 566.4 L1206.8 558.4 L1194.5 550.4 L1182.3 542.4 L1170.2 534.4 L1158.3 526.4 L1146.5 518.4 L1134.8 510.4 L1123.2 502.4 L1111.8 494.4 L1100.4 486.4 L1089.2 478.4 L1078.1 470.4 L1067.1 462.4 L1056.2 454.4 L1045.5 446.4 L1034.8 438.4 L1024.3 430.4 L1013.8 422.4 L1003.5 414.4 L993.3 406.4 L983.2 398.4 L973.2 390.4 L963.3 382.4 L953.5 374.4 L943.8 366.4 L934.2 358.4 L924.8 350.4 L915.4 342.4 L906.1 334.4 L897 326.4 L887.9 318.4 L879 310.4 L870.1 302.4 L861.3 294.4 L852.7 286.4 L844.1 278.4 L835.6 270.4 L827.2 262.4 L819 254.4 L810.8 246.4 L802.7 238.4 L794.7 230.4 L786.8 222.4 L779 214.4 L771.3 206.4 L763.6 198.4 L756.1 190.4 L748.7 182.4 L741.3 174.4 L734 166.4 L726.9 158.4 L719.8 150.4 L712.8 142.4 L705.9 134.4 L699 126.4 L692.3 118.4 L685.6 110.4 L679 102.4 L672.5 94.4 L666.1 86.4 L659.8 78.4 L653.5 70.4 L647.4 62.4 L641.3 54.4 L635.3 46.4 L629.4 38.4 L623.5 30.4 L617.7 22.4 L612 14.4" stroke="#6a0000" stroke-width="0.9"/>
<path d="M190.8 781.5 L189.8 780.2 L188.4 778.2 L186.9 776.1 L185.4 774.1 L184 772 L182.5 770 L181 767.9 L179.5 765.8 L178 763.7 L176.4 761.6 L174.9 759.5 L173.4 757.3 L171.8 755.2 L170.3 753 L168.7 750.8 L167.1 748.6 L165.5 746.4 L163.9 744.2 L162.3 741.9 L160.7 739.7 L159.1 737.4 L157.5 735.1 L155.8 732.8 L154.2 730.5 L152.6 728.2 L150.9 725.8 L149.2 723.4 L147.5 721.1 L145.9 718.6 L144.2 716.2 L142.5 713.8 L140.7 711.3 L139 708.9 L137.3 706.4 L135.5 703.8 L133.8 701.3 L132 698.8 L130.3 696.2 L128.5 693.6 L126.7 691 L124.9 688.4 L123.1 685.7 L121.3 683 L119.5 680.3 L117.7 677.6 L115.9 674.9 L114 672.1 L112.2 669.3 L110.3 666.5 L108.4 663.7 L106.6 660.8 L104.7 657.9 L102.8 655 L100.9 652.1 L99 649.1 L97.1 646.1 L95.1 643.1 L93.2 640.1 L91.2 637 L89.3 633.9 L87.3 630.8 L85.4 627.6 L83.4 624.5 L81.4 621.2 L79.4 618 L77.4 614.7 L75.4 611.4 L73.3 608 L71.3 604.7 L69.3 601.3 L67.2 597.8 L65.2 594.3 L63.1 590.8 L61 587.2 L58.9 583.6 L56.8 580 L54.7 576.3 L52.6 572.6 L50.5 568.8 L48.4 565 L46.2 561.2 L44.1 557.3 L41.9 553.3 L39.7 549.3 L37.6 545.3 L35.4 541.2 L33.2 537.1 L31 532.9 L28.7 528.7 L26.5 524.4 L24.3 520 L22 515.6 L19.8 511.1 L17.5 506.6 L15.2 502 L12.9 497.3 L10.7 492.6 L8.3 487.8 L6 483 L3.7 478 L1.4 473 L-1 467.9 L-3.3 462.8 L-5.7 457.5 L-8.1 452.2 L-10.5 446.8 L-12.9 441.3 L-15.3 435.7 L-17.7 430 L-20.1 424.2 L-22.5 418.3 L-25 412.3 L-27.4 406.2 L-29.9 400 L-32.4 393.6 L-34.8 387.2 L-37.3 380.6 L-39.8 373.8 L-42.3 367 L-44.9 360 L-47.4 352.8 L-49.9 345.5 L-52.4 338 L-55 330.4 L-57.5 322.5 L-60.1 314.5 L-62.6 306.3 L-65.2 297.8 L-67.8 289.2 L-70.3 280.3 L-72.9 271.2 L-75.5 261.8 L-78 252.2 L-80.6 242.2 L-83.1 232 L-85.7 221.4 L-88.2 210.5 L-90.7 199.2 L-93.2 187.5 L-95.7 175.4 L-98.1 162.8 L-100.5 149.8 L-102.9 136.2 L-105.2 122 L-107.5 107.2 L-109.7 91.7 L-111.8 75.5 L-113.8 58.4 L-115.7 40.4 L-117.5 21.3 L-118.5 8M227 781.5 L226.1 780.2 L224.6 778.2 L223.2 776.1 L221.7 774.1 L220.3 772 L218.8 770 L217.3 767.9 L215.8 765.8 L214.3 763.7 L212.8 761.6 L211.3 759.5 L209.8 757.3 L208.2 755.2 L206.7 753 L205.1 750.8 L203.5 748.6 L201.9 746.4 L200.3 744.2 L198.7 741.9 L197.1 739.7 L195.5 737.4 L193.9 735.1 L192.2 732.8 L190.6 730.5 L188.9 728.2 L187.2 725.8 L185.5 723.4 L183.8 721.1 L182.1 718.6 L180.4 716.2 L178.7 713.8 L176.9 711.3 L175.2 708.9 L173.4 706.4 L171.7 703.8 L169.9 701.3 L168.1 698.8 L166.3 696.2 L164.5 693.6 L162.6 691 L160.8 688.4 L159 685.7 L157.1 683 L155.3 680.3 L153.4 677.6 L151.5 674.9 L149.6 672.1 L147.7 669.3 L145.8 666.5 L143.9 663.7 L141.9 660.8 L140 657.9 L138 655 L136.1 652.1 L134.1 649.1 L132.1 646.1 L130.1 643.1 L128.1 640.1 L126.1 637 L124 633.9 L122 630.8 L120 627.6 L117.9 624.5 L115.8 621.2 L113.8 618 L111.7 614.7 L109.6 611.4 L107.5 608 L105.3 604.7 L103.2 601.3 L101.1 597.8 L98.9 594.3 L96.8 590.8 L94.6 587.2 L92.4 583.6 L90.2 580 L88 576.3 L85.8 572.6 L83.6 568.8 L81.4 565 L79.1 561.2 L76.9 557.3 L74.6 553.3 L72.3 549.3 L70 545.3 L67.7 541.2 L65.4 537.1 L63.1 532.9 L60.8 528.7 L58.4 524.4 L56.1 520 L53.7 515.6 L51.3 511.1 L48.9 506.6 L46.5 502 L44.1 497.3 L41.7 492.6 L39.3 487.8 L36.8 483 L34.4 478 L31.9 473 L29.4 467.9 L27 462.8 L24.5 457.5 L21.9 452.2 L19.4 446.8 L16.9 441.3 L14.3 435.7 L11.8 430 L9.2 424.2 L6.6 418.3 L4 412.3 L1.4 406.2 L-1.2 400 L-3.8 393.6 L-6.5 387.2 L-9.1 380.6 L-11.8 373.8 L-14.4 367 L-17.1 360 L-19.8 352.8 L-22.5 345.5 L-25.2 338 L-28 330.4 L-30.7 322.5 L-33.4 314.5 L-36.2 306.3 L-38.9 297.8 L-41.7 289.2 L-44.4 280.3 L-47.2 271.2 L-50 261.8 L-52.7 252.2 L-55.5 242.2 L-58.3 232 L-61 221.4 L-63.8 210.5 L-66.6 199.2 L-69.3 187.5 L-72 175.4 L-74.7 162.8 L-77.4 149.8 L-80 136.2 L-82.6 122 L-85.1 107.2 L-87.6 91.7 L-90.1 75.5 L-92.4 58.4 L-94.6 40.4 L-96.7 21.3 L-98.1 8M263.2 781.5 L262.3 780.2 L260.9 778.2 L259.5 776.1 L258.1 774.1 L256.7 772 L255.3 770 L253.9 767.9 L252.4 765.8 L250.9 763.7 L249.5 761.6 L248 759.5 L246.5 757.3 L245 755.2 L243.5 753 L241.9 750.8 L240.4 748.6 L238.8 746.4 L237.3 744.2 L235.7 741.9 L234.1 739.7 L232.5 737.4 L230.9 735.1 L229.2 732.8 L227.6 730.5 L225.9 728.2 L224.3 725.8 L222.6 723.4 L220.9 721.1 L219.2 718.6 L217.5 716.2 L215.7 713.8 L214 711.3 L212.2 708.9 L210.5 706.4 L208.7 703.8 L206.9 701.3 L205.1 698.8 L203.3 696.2 L201.5 693.6 L199.6 691 L197.8 688.4 L195.9 685.7 L194 683 L192.1 680.3 L190.2 677.6 L188.3 674.9 L186.4 672.1 L184.4 669.3 L182.5 666.5 L180.5 663.7 L178.5 660.8 L176.5 657.9 L174.5 655 L172.5 652.1 L170.5 649.1 L168.4 646.1 L166.4 643.1 L164.3 640.1 L162.2 637 L160.2 633.9 L158 630.8 L155.9 627.6 L153.8 624.5 L151.7 621.2 L149.5 618 L147.4 614.7 L145.2 611.4 L143 608 L140.8 604.7 L138.6 601.3 L136.4 597.8 L134.1 594.3 L131.9 590.8 L129.6 587.2 L127.3 583.6 L125.1 580 L122.8 576.3 L120.5 572.6 L118.1 568.8 L115.8 565 L113.4 561.2 L111.1 557.3 L108.7 553.3 L106.3 549.3 L103.9 545.3 L101.5 541.2 L99.1 537.1 L96.7 532.9 L94.2 528.7 L91.8 524.4 L89.3 520 L86.8 515.6 L84.3 511.1 L81.8 506.6 L79.3 502 L76.8 497.3 L74.2 492.6 L71.6 487.8 L69.1 483 L66.5 478 L63.9 473 L61.3 467.9 L58.6 462.8 L56 457.5 L53.3 452.2 L50.7 446.8 L48 441.3 L45.3 435.7 L42.6 430 L39.9 424.2 L37.1 418.3 L34.4 412.3 L31.6 406.2 L28.8 400 L26 393.6 L23.2 387.2 L20.4 380.6 L17.6 373.8 L14.7 367 L11.9 360 L9 352.8 L6.1 345.5 L3.2 338 L0.3 330.4 L-2.6 322.5 L-5.5 314.5 L-8.5 306.3 L-11.4 297.8 L-14.4 289.2 L-17.3 280.3 L-20.3 271.2 L-23.3 261.8 L-26.3 252.2 L-29.3 242.2 L-32.3 232 L-35.3 221.4 L-38.3 210.5 L-41.3 199.2 L-44.3 187.5 L-47.3 175.4 L-50.2 162.8 L-53.2 149.8 L-56.1 136.2 L-59 122 L-61.8 107.2 L-64.6 91.7 L-67.3 75.5 L-70 58.4 L-72.6 40.4 L-75.1 21.3 L-76.6 8M299.4 781.5 L298.5 780.2 L297.3 778.2 L296 776.1 L294.6 774.1 L293.3 772 L292 770 L290.6 767.9 L289.2 765.8 L287.9 763.7 L286.5 761.6 L285 759.5 L283.6 757.3 L282.2 755.2 L280.7 753 L279.3 750.8 L277.8 748.6 L276.3 746.4 L274.8 744.2 L273.3 741.9 L271.7 739.7 L270.2 737.4 L268.6 735.1 L267 732.8 L265.4 730.5 L263.8 728.2 L262.2 725.8 L260.6 723.4 L258.9 721.1 L257.3 718.6 L255.6 716.2 L253.9 713.8 L252.2 711.3 L250.4 708.9 L248.7 706.4 L246.9 703.8 L245.2 701.3 L243.4 698.8 L241.6 696.2 L239.7 693.6 L237.9 691 L236.1 688.4 L234.2 685.7 L232.3 683 L230.4 680.3 L228.5 677.6 L226.6 674.9 L224.7 672.1 L222.7 669.3 L220.7 666.5 L218.7 663.7 L216.7 660.8 L214.7 657.9 L212.7 655 L210.7 652.1 L208.6 649.1 L206.5 646.1 L204.4 643.1 L202.3 640.1 L200.2 637 L198.1 633.9 L195.9 630.8 L193.8 627.6 L191.6 624.5 L189.4 621.2 L187.2 618 L184.9 614.7 L182.7 611.4 L180.4 608 L178.2 604.7 L175.9 601.3 L173.6 597.8 L171.3 594.3 L169 590.8 L166.6 587.2 L164.3 583.6 L161.9 580 L159.5 576.3 L157.1 572.6 L154.7 568.8 L152.3 565 L149.8 561.2 L147.3 557.3 L144.9 553.3 L142.4 549.3 L139.9 545.3 L137.4 541.2 L134.8 537.1 L132.3 532.9 L129.7 528.7 L127.1 524.4 L124.6 520 L121.9 515.6 L119.3 511.1 L116.7 506.6 L114 502 L111.4 497.3 L108.7 492.6 L106 487.8 L103.3 483 L100.6 478 L97.8 473 L95.1 467.9 L92.3 462.8 L89.5 457.5 L86.7 452.2 L83.9 446.8 L81 441.3 L78.2 435.7 L75.3 430 L72.4 424.2 L69.5 418.3 L66.6 412.3 L63.7 406.2 L60.7 400 L57.8 393.6 L54.8 387.2 L51.8 380.6 L48.8 373.8 L45.8 367 L42.7 360 L39.7 352.8 L36.6 345.5 L33.5 338 L30.4 330.4 L27.3 322.5 L24.1 314.5 L21 306.3 L17.8 297.8 L14.6 289.2 L11.4 280.3 L8.2 271.2 L5 261.8 L1.8 252.2 L-1.4 242.2 L-4.7 232 L-7.9 221.4 L-11.2 210.5 L-14.4 199.2 L-17.7 187.5 L-21 175.4 L-24.2 162.8 L-27.4 149.8 L-30.6 136.2 L-33.8 122 L-37 107.2 L-40.1 91.7 L-43.2 75.5 L-46.2 58.4 L-49.2 40.4 L-52 21.3 L-53.8 8M335.6 781.5 L334.8 780.2 L333.7 778.2 L332.5 776.1 L331.3 774.1 L330.1 772 L328.8 770 L327.6 767.9 L326.3 765.8 L325.1 763.7 L323.8 761.6 L322.5 759.5 L321.2 757.3 L319.8 755.2 L318.5 753 L317.1 750.8 L315.7 748.6 L314.4 746.4 L313 744.2 L311.5 741.9 L310.1 739.7 L308.6 737.4 L307.2 735.1 L305.7 732.8 L304.2 730.5 L302.7 728.2 L301.1 725.8 L299.6 723.4 L298 721.1 L296.4 718.6 L294.8 716.2 L293.2 713.8 L291.6 711.3 L289.9 708.9 L288.2 706.4 L286.5 703.8 L284.8 701.3 L283.1 698.8 L281.4 696.2 L279.6 693.6 L277.8 691 L276 688.4 L274.2 685.7 L272.4 683 L270.5 680.3 L268.6 677.6 L266.7 674.9 L264.8 672.1 L262.9 669.3 L261 666.5 L259 663.7 L257 660.8 L255 657.9 L253 655 L250.9 652.1 L248.9 649.1 L246.8 646.1 L244.7 643.1 L242.6 640.1 L240.5 637 L238.3 633.9 L236.2 630.8 L234 627.6 L231.8 624.5 L229.5 621.2 L227.3 618 L225 614.7 L222.7 611.4 L220.4 608 L218.1 604.7 L215.8 601.3 L213.4 597.8 L211.1 594.3 L208.7 590.8 L206.3 587.2 L203.8 583.6 L201.4 580 L198.9 576.3 L196.5 572.6 L194 568.8 L191.4 565 L188.9 561.2 L186.4 557.3 L183.8 553.3 L181.2 549.3 L178.6 545.3 L176 541.2 L173.3 537.1 L170.7 532.9 L168 528.7 L165.3 524.4 L162.6 520 L159.9 515.6 L157.1 511.1 L154.4 506.6 L151.6 502 L148.8 497.3 L146 492.6 L143.1 487.8 L140.3 483 L137.4 478 L134.5 473 L131.6 467.9 L128.7 462.8 L125.7 457.5 L122.8 452.2 L119.8 446.8 L116.8 441.3 L113.8 435.7 L110.7 430 L107.7 424.2 L104.6 418.3 L101.5 412.3 L98.4 406.2 L95.3 400 L92.1 393.6 L89 387.2 L85.8 380.6 L82.6 373.8 L79.3 367 L76.1 360 L72.8 352.8 L69.5 345.5 L66.2 338 L62.9 330.4 L59.6 322.5 L56.2 314.5 L52.8 306.3 L49.5 297.8 L46 289.2 L42.6 280.3 L39.2 271.2 L35.7 261.8 L32.2 252.2 L28.7 242.2 L25.2 232 L21.7 221.4 L18.2 210.5 L14.6 199.2 L11.1 187.5 L7.5 175.4 L4 162.8 L0.4 149.8 L-3.1 136.2 L-6.6 122 L-10.2 107.2 L-13.6 91.7 L-17.1 75.5 L-20.5 58.4 L-23.8 40.4 L-27.1 21.3 L-29.2 8M371.8 781.5 L371.1 780.2 L370.1 778.2 L369.1 776.1 L368 774.1 L366.9 772 L365.8 770 L364.8 767.9 L363.6 765.8 L362.5 763.7 L361.4 761.6 L360.2 759.5 L359.1 757.3 L357.9 755.2 L356.7 753 L355.5 750.8 L354.2 748.6 L353 746.4 L351.7 744.2 L350.4 741.9 L349.1 739.7 L347.8 737.4 L346.5 735.1 L345.2 732.8 L343.8 730.5 L342.4 728.2 L341 725.8 L339.6 723.4 L338.2 721.1 L336.7 718.6 L335.2 716.2 L333.7 713.8 L332.2 711.3 L330.7 708.9 L329.2 706.4 L327.6 703.8 L326 701.3 L324.4 698.8 L322.8 696.2 L321.1 693.6 L319.4 691 L317.7 688.4 L316 685.7 L314.3 683 L312.5 680.3 L310.7 677.6 L308.9 674.9 L307.1 672.1 L305.3 669.3 L303.4 666.5 L301.5 663.7 L299.6 660.8 L297.7 657.9 L295.7 655 L293.8 652.1 L291.8 649.1 L289.7 646.1 L287.7 643.1 L285.6 640.1 L283.5 637 L281.4 633.9 L279.3 630.8 L277.1 627.6 L274.9 624.5 L272.7 621.2 L270.5 618 L268.2 614.7 L265.9 611.4 L263.6 608 L261.3 604.7 L259 601.3 L256.6 597.8 L254.2 594.3 L251.8 590.8 L249.3 587.2 L246.9 583.6 L244.4 580 L241.9 576.3 L239.4 572.6 L236.8 568.8 L234.2 565 L231.6 561.2 L229 557.3 L226.4 553.3 L223.7 549.3 L221 545.3 L218.3 541.2 L215.6 537.1 L212.8 532.9 L210 528.7 L207.2 524.4 L204.4 520 L201.5 515.6 L198.7 511.1 L195.8 506.6 L192.9 502 L190 497.3 L187 492.6 L184 487.8 L181 483 L178 478 L175 473 L171.9 467.9 L168.8 462.8 L165.7 457.5 L162.6 452.2 L159.4 446.8 L156.3 441.3 L153.1 435.7 L149.8 430 L146.6 424.2 L143.4 418.3 L140.1 412.3 L136.8 406.2 L133.4 400 L130.1 393.6 L126.7 387.2 L123.3 380.6 L119.9 373.8 L116.5 367 L113 360 L109.5 352.8 L106 345.5 L102.5 338 L98.9 330.4 L95.3 322.5 L91.7 314.5 L88.1 306.3 L84.4 297.8 L80.8 289.2 L77.1 280.3 L73.4 271.2 L69.6 261.8 L65.9 252.2 L62.1 242.2 L58.3 232 L54.5 221.4 L50.6 210.5 L46.8 199.2 L42.9 187.5 L39 175.4 L35.1 162.8 L31.2 149.8 L27.3 136.2 L23.4 122 L19.5 107.2 L15.7 91.7 L11.8 75.5 L8 58.4 L4.2 40.4 L0.5 21.3 L-1.9 8M408 781.5 L407.4 780.2 L406.6 778.2 L405.7 776.1 L404.8 774.1 L403.9 772 L403 770 L402.1 767.9 L401.1 765.8 L400.2 763.7 L399.2 761.6 L398.2 759.5 L397.2 757.3 L396.2 755.2 L395.2 753 L394.2 750.8 L393.1 748.6 L392.1 746.4 L391 744.2 L389.9 741.9 L388.8 739.7 L387.6 737.4 L386.5 735.1 L385.3 732.8 L384.1 730.5 L382.9 728.2 L381.7 725.8 L380.5 723.4 L379.2 721.1 L378 718.6 L376.7 716.2 L375.4 713.8 L374 711.3 L372.7 708.9 L371.3 706.4 L369.9 703.8 L368.5 701.3 L367.1 698.8 L365.6 696.2 L364.2 693.6 L362.7 691 L361.1 688.4 L359.6 685.7 L358 683 L356.5 680.3 L354.8 677.6 L353.2 674.9 L351.5 672.1 L349.9 669.3 L348.1 666.5 L346.4 663.7 L344.6 660.8 L342.9 657.9 L341 655 L339.2 652.1 L337.3 649.1 L335.4 646.1 L333.5 643.1 L331.6 640.1 L329.6 637 L327.6 633.9 L325.6 630.8 L323.5 627.6 L321.4 624.5 L319.3 621.2 L317.2 618 L315 614.7 L312.8 611.4 L310.5 608 L308.3 604.7 L306 601.3 L303.7 597.8 L301.3 594.3 L299 590.8 L296.5 587.2 L294.1 583.6 L291.6 580 L289.1 576.3 L286.6 572.6 L284.1 568.8 L281.5 565 L278.9 561.2 L276.2 557.3 L273.5 553.3 L270.8 549.3 L268.1 545.3 L265.3 541.2 L262.5 537.1 L259.7 532.9 L256.9 528.7 L254 524.4 L251.1 520 L248.2 515.6 L245.2 511.1 L242.2 506.6 L239.2 502 L236.1 497.3 L233.1 492.6 L230 487.8 L226.8 483 L223.7 478 L220.5 473 L217.3 467.9 L214 462.8 L210.8 457.5 L207.5 452.2 L204.1 446.8 L200.8 441.3 L197.4 435.7 L194 430 L190.6 424.2 L187.1 418.3 L183.6 412.3 L180.1 406.2 L176.6 400 L173 393.6 L169.4 387.2 L165.8 380.6 L162.1 373.8 L158.4 367 L154.7 360 L151 352.8 L147.2 345.5 L143.4 338 L139.6 330.4 L135.8 322.5 L131.9 314.5 L128 306.3 L124 297.8 L120.1 289.2 L116.1 280.3 L112.1 271.2 L108 261.8 L103.9 252.2 L99.8 242.2 L95.7 232 L91.5 221.4 L87.4 210.5 L83.2 199.2 L78.9 187.5 L74.7 175.4 L70.4 162.8 L66.1 149.8 L61.8 136.2 L57.5 122 L53.2 107.2 L48.8 91.7 L44.5 75.5 L40.2 58.4 L36 40.4 L31.7 21.3 L29 8M444.2 781.5 L443.7 780.2 L443.1 778.2 L442.4 776.1 L441.6 774.1 L440.9 772 L440.2 770 L439.5 767.9 L438.7 765.8 L437.9 763.7 L437.2 761.6 L436.4 759.5 L435.6 757.3 L434.8 755.2 L433.9 753 L433.1 750.8 L432.3 748.6 L431.4 746.4 L430.5 744.2 L429.6 741.9 L428.7 739.7 L427.8 737.4 L426.9 735.1 L425.9 732.8 L425 730.5 L424 728.2 L423 725.8 L422 723.4 L420.9 721.1 L419.9 718.6 L418.8 716.2 L417.7 713.8 L416.6 711.3 L415.5 708.9 L414.4 706.4 L413.2 703.8 L412 701.3 L410.8 698.8 L409.6 696.2 L408.4 693.6 L407.1 691 L405.8 688.4 L404.5 685.7 L403.2 683 L401.9 680.3 L400.5 677.6 L399.1 674.9 L397.7 672.1 L396.2 669.3 L394.7 666.5 L393.2 663.7 L391.7 660.8 L390.2 657.9 L388.6 655 L387 652.1 L385.3 649.1 L383.7 646.1 L382 643.1 L380.2 640.1 L378.5 637 L376.7 633.9 L374.9 630.8 L373 627.6 L371.1 624.5 L369.2 621.2 L367.3 618 L365.3 614.7 L363.3 611.4 L361.2 608 L359.1 604.7 L357 601.3 L354.9 597.8 L352.7 594.3 L350.4 590.8 L348.2 587.2 L345.9 583.6 L343.5 580 L341.2 576.3 L338.7 572.6 L336.3 568.8 L333.8 565 L331.3 561.2 L328.7 557.3 L326.1 553.3 L323.4 549.3 L320.8 545.3 L318 541.2 L315.3 537.1 L312.5 532.9 L309.6 528.7 L306.8 524.4 L303.8 520 L300.9 515.6 L297.9 511.1 L294.9 506.6 L291.8 502 L288.7 497.3 L285.5 492.6 L282.3 487.8 L279.1 483 L275.9 478 L272.6 473 L269.2 467.9 L265.8 462.8 L262.4 457.5 L259 452.2 L255.5 446.8 L252 441.3 L248.4 435.7 L244.8 430 L241.2 424.2 L237.6 418.3 L233.9 412.3 L230.1 406.2 L226.4 400 L222.6 393.6 L218.7 387.2 L214.8 380.6 L210.9 373.8 L207 367 L203 360 L199 352.8 L195 345.5 L190.9 338 L186.8 330.4 L182.6 322.5 L178.4 314.5 L174.2 306.3 L169.9 297.8 L165.6 289.2 L161.3 280.3 L156.9 271.2 L152.5 261.8 L148.1 252.2 L143.6 242.2 L139.1 232 L134.5 221.4 L129.9 210.5 L125.3 199.2 L120.7 187.5 L116 175.4 L111.3 162.8 L106.5 149.8 L101.8 136.2 L97 122 L92.1 107.2 L87.3 91.7 L82.5 75.5 L77.6 58.4 L72.8 40.4 L67.9 21.3 L64.7 8M480.4 781.5 L480.1 780.2 L479.5 778.2 L479 776.1 L478.5 774.1 L478 772 L477.4 770 L476.8 767.9 L476.3 765.8 L475.7 763.7 L475.1 761.6 L474.5 759.5 L473.9 757.3 L473.3 755.2 L472.7 753 L472.1 750.8 L471.4 748.6 L470.8 746.4 L470.1 744.2 L469.4 741.9 L468.7 739.7 L468 737.4 L467.3 735.1 L466.6 732.8 L465.9 730.5 L465.1 728.2 L464.4 725.8 L463.6 723.4 L462.8 721.1 L462 718.6 L461.2 716.2 L460.4 713.8 L459.5 711.3 L458.6 708.9 L457.8 706.4 L456.9 703.8 L456 701.3 L455 698.8 L454.1 696.2 L453.1 693.6 L452.1 691 L451.1 688.4 L450.1 685.7 L449.1 683 L448 680.3 L446.9 677.6 L445.8 674.9 L444.7 672.1 L443.6 669.3 L442.4 666.5 L441.2 663.7 L440 660.8 L438.7 657.9 L437.5 655 L436.2 652.1 L434.8 649.1 L433.5 646.1 L432.1 643.1 L430.7 640.1 L429.3 637 L427.8 633.9 L426.3 630.8 L424.8 627.6 L423.2 624.5 L421.6 621.2 L420 618 L418.3 614.7 L416.6 611.4 L414.9 608 L413.1 604.7 L411.3 601.3 L409.4 597.8 L407.6 594.3 L405.6 590.8 L403.7 587.2 L401.6 583.6 L399.6 580 L397.5 576.3 L395.4 572.6 L393.2 568.8 L390.9 565 L388.7 561.2 L386.3 557.3 L384 553.3 L381.5 549.3 L379.1 545.3 L376.6 541.2 L374 537.1 L371.4 532.9 L368.7 528.7 L366 524.4 L363.2 520 L360.4 515.6 L357.5 511.1 L354.6 506.6 L351.6 502 L348.6 497.3 L345.5 492.6 L342.3 487.8 L339.1 483 L335.9 478 L332.6 473 L329.2 467.9 L325.8 462.8 L322.4 457.5 L318.8 452.2 L315.3 446.8 L311.7 441.3 L308 435.7 L304.3 430 L300.5 424.2 L296.7 418.3 L292.8 412.3 L288.9 406.2 L284.9 400 L280.9 393.6 L276.8 387.2 L272.7 380.6 L268.6 373.8 L264.3 367 L260.1 360 L255.8 352.8 L251.4 345.5 L247 338 L242.6 330.4 L238.1 322.5 L233.5 314.5 L229 306.3 L224.3 297.8 L219.6 289.2 L214.9 280.3 L210.1 271.2 L205.3 261.8 L200.5 252.2 L195.5 242.2 L190.6 232 L185.6 221.4 L180.5 210.5 L175.4 199.2 L170.3 187.5 L165.1 175.4 L159.8 162.8 L154.5 149.8 L149.2 136.2 L143.8 122 L138.4 107.2 L133 91.7 L127.5 75.5 L122 58.4 L116.5 40.4 L110.9 21.3 L107.2 8M516.6 781.5 L516.4 780.2 L516 778.2 L515.7 776.1 L515.3 774.1 L514.9 772 L514.5 770 L514.2 767.9 L513.8 765.8 L513.4 763.7 L513 761.6 L512.6 759.5 L512.2 757.3 L511.7 755.2 L511.3 753 L510.9 750.8 L510.4 748.6 L510 746.4 L509.5 744.2 L509.1 741.9 L508.6 739.7 L508.1 737.4 L507.6 735.1 L507.1 732.8 L506.6 730.5 L506.1 728.2 L505.5 725.8 L505 723.4 L504.5 721.1 L503.9 718.6 L503.3 716.2 L502.7 713.8 L502.2 711.3 L501.5 708.9 L500.9 706.4 L500.3 703.8 L499.7 701.3 L499 698.8 L498.3 696.2 L497.7 693.6 L497 691 L496.3 688.4 L495.5 685.7 L494.8 683 L494 680.3 L493.3 677.6 L492.5 674.9 L491.7 672.1 L490.9 669.3 L490 666.5 L489.2 663.7 L488.3 660.8 L487.4 657.9 L486.5 655 L485.5 652.1 L484.6 649.1 L483.6 646.1 L482.6 643.1 L481.5 640.1 L480.5 637 L479.4 633.9 L478.3 630.8 L477.2 627.6 L476 624.5 L474.8 621.2 L473.6 618 L472.3 614.7 L471.1 611.4 L469.8 608 L468.4 604.7 L467 601.3 L465.6 597.8 L464.2 594.3 L462.7 590.8 L461.2 587.2 L459.6 583.6 L458 580 L456.3 576.3 L454.7 572.6 L452.9 568.8 L451.1 565 L449.3 561.2 L447.4 557.3 L445.5 553.3 L443.5 549.3 L441.5 545.3 L439.4 541.2 L437.3 537.1 L435.1 532.9 L432.8 528.7 L430.5 524.4 L428.1 520 L425.7 515.6 L423.2 511.1 L420.7 506.6 L418 502 L415.3 497.3 L412.6 492.6 L409.7 487.8 L406.8 483 L403.8 478 L400.8 473 L397.7 467.9 L394.5 462.8 L391.2 457.5 L387.8 452.2 L384.4 446.8 L380.9 441.3 L377.3 435.7 L373.7 430 L370 424.2 L366.2 418.3 L362.3 412.3 L358.3 406.2 L354.3 400 L350.2 393.6 L346 387.2 L341.7 380.6 L337.4 373.8 L333 367 L328.5 360 L324 352.8 L319.3 345.5 L314.6 338 L309.9 330.4 L305.1 322.5 L300.2 314.5 L295.2 306.3 L290.2 297.8 L285.1 289.2 L279.9 280.3 L274.7 271.2 L269.4 261.8 L264 252.2 L258.6 242.2 L253.1 232 L247.6 221.4 L242 210.5 L236.3 199.2 L230.5 187.5 L224.7 175.4 L218.8 162.8 L212.9 149.8 L206.9 136.2 L200.8 122 L194.7 107.2 L188.5 91.7 L182.3 75.5 L175.9 58.4 L169.6 40.4 L163.2 21.3 L158.9 8M552.8 781.5 L552.7 780.2 L552.5 778.2 L552.2 776.1 L552 774.1 L551.8 772 L551.6 770 L551.4 767.9 L551.1 765.8 L550.9 763.7 L550.7 761.6 L550.4 759.5 L550.2 757.3 L549.9 755.2 L549.7 753 L549.4 750.8 L549.1 748.6 L548.9 746.4 L548.6 744.2 L548.3 741.9 L548 739.7 L547.7 737.4 L547.4 735.1 L547.1 732.8 L546.8 730.5 L546.5 728.2 L546.2 725.8 L545.9 723.4 L545.5 721.1 L545.2 718.6 L544.8 716.2 L544.5 713.8 L544.1 711.3 L543.8 708.9 L543.4 706.4 L543 703.8 L542.6 701.3 L542.2 698.8 L541.8 696.2 L541.4 693.6 L540.9 691 L540.5 688.4 L540.1 685.7 L539.6 683 L539.1 680.3 L538.6 677.6 L538.2 674.9 L537.7 672.1 L537.1 669.3 L536.6 666.5 L536.1 663.7 L535.5 660.8 L535 657.9 L534.4 655 L533.8 652.1 L533.2 649.1 L532.5 646.1 L531.9 643.1 L531.2 640.1 L530.6 637 L529.9 633.9 L529.2 630.8 L528.4 627.6 L527.7 624.5 L526.9 621.2 L526.1 618 L525.3 614.7 L524.5 611.4 L523.6 608 L522.8 604.7 L521.8 601.3 L520.9 597.8 L519.9 594.3 L519 590.8 L517.9 587.2 L516.9 583.6 L515.8 580 L514.7 576.3 L513.6 572.6 L512.4 568.8 L511.2 565 L509.9 561.2 L508.6 557.3 L507.3 553.3 L505.9 549.3 L504.5 545.3 L503 541.2 L501.5 537.1 L499.9 532.9 L498.3 528.7 L496.6 524.4 L494.9 520 L493.1 515.6 L491.2 511.1 L489.3 506.6 L487.4 502 L485.3 497.3 L483.2 492.6 L481 487.8 L478.7 483 L476.4 478 L474 473 L471.5 467.9 L468.9 462.8 L466.2 457.5 L463.4 452.2 L460.6 446.8 L457.6 441.3 L454.5 435.7 L451.4 430 L448.1 424.2 L444.7 418.3 L441.3 412.3 L437.7 406.2 L433.9 400 L430.1 393.6 L426.2 387.2 L422.1 380.6 L418 373.8 L413.7 367 L409.3 360 L404.7 352.8 L400.1 345.5 L395.3 338 L390.5 330.4 L385.5 322.5 L380.4 314.5 L375.1 306.3 L369.8 297.8 L364.4 289.2 L358.8 280.3 L353.1 271.2 L347.4 261.8 L341.5 252.2 L335.5 242.2 L329.5 232 L323.3 221.4 L317 210.5 L310.7 199.2 L304.2 187.5 L297.6 175.4 L291 162.8 L284.2 149.8 L277.4 136.2 L270.4 122 L263.4 107.2 L256.3 91.7 L249.1 75.5 L241.7 58.4 L234.3 40.4 L226.9 21.3 L221.8 8M589 781.5 L588.9 780.2 L588.9 778.2 L588.8 776.1 L588.7 774.1 L588.6 772 L588.5 770 L588.4 767.9 L588.3 765.8 L588.2 763.7 L588.1 761.6 L588 759.5 L587.9 757.3 L587.8 755.2 L587.7 753 L587.6 750.8 L587.5 748.6 L587.4 746.4 L587.3 744.2 L587.1 741.9 L587 739.7 L586.9 737.4 L586.8 735.1 L586.6 732.8 L586.5 730.5 L586.4 728.2 L586.2 725.8 L586.1 723.4 L585.9 721.1 L585.8 718.6 L585.6 716.2 L585.5 713.8 L585.3 711.3 L585.1 708.9 L584.9 706.4 L584.8 703.8 L584.6 701.3 L584.4 698.8 L584.2 696.2 L584 693.6 L583.8 691 L583.6 688.4 L583.4 685.7 L583.2 683 L583 680.3 L582.7 677.6 L582.5 674.9 L582.3 672.1 L582 669.3 L581.8 666.5 L581.5 663.7 L581.2 660.8 L581 657.9 L580.7 655 L580.4 652.1 L580.1 649.1 L579.8 646.1 L579.5 643.1 L579.1 640.1 L578.8 637 L578.4 633.9 L578.1 630.8 L577.7 627.6 L577.3 624.5 L576.9 621.2 L576.5 618 L576.1 614.7 L575.7 611.4 L575.2 608 L574.8 604.7 L574.3 601.3 L573.8 597.8 L573.3 594.3 L572.8 590.8 L572.2 587.2 L571.7 583.6 L571.1 580 L570.5 576.3 L569.9 572.6 L569.2 568.8 L568.6 565 L567.9 561.2 L567.2 557.3 L566.4 553.3 L565.6 549.3 L564.8 545.3 L564 541.2 L563.2 537.1 L562.3 532.9 L561.3 528.7 L560.4 524.4 L559.4 520 L558.3 515.6 L557.2 511.1 L556.1 506.6 L554.9 502 L553.7 497.3 L552.4 492.6 L551.1 487.8 L549.7 483 L548.3 478 L546.7 473 L545.2 467.9 L543.5 462.8 L541.8 457.5 L540 452.2 L538.1 446.8 L536.2 441.3 L534.1 435.7 L532 430 L529.7 424.2 L527.4 418.3 L524.9 412.3 L522.3 406.2 L519.6 400 L516.8 393.6 L513.8 387.2 L510.7 380.6 L507.4 373.8 L504 367 L500.5 360 L496.8 352.8 L492.9 345.5 L488.8 338 L484.5 330.4 L480.1 322.5 L475.5 314.5 L470.7 306.3 L465.6 297.8 L460.4 289.2 L455 280.3 L449.4 271.2 L443.6 261.8 L437.6 252.2 L431.4 242.2 L425 232 L418.4 221.4 L411.6 210.5 L404.7 199.2 L397.6 187.5 L390.3 175.4 L382.8 162.8 L375.2 149.8 L367.4 136.2 L359.4 122 L351.3 107.2 L343 91.7 L334.6 75.5 L326 58.4 L317.3 40.4 L308.5 21.3 L302.5 8M625.2 781.5 L625.2 780.2 L625.2 778.2 L625.3 776.1 L625.3 774.1 L625.3 772 L625.3 770 L625.3 767.9 L625.3 765.8 L625.4 763.7 L625.4 761.6 L625.4 759.5 L625.4 757.3 L625.4 755.2 L625.4 753 L625.5 750.8 L625.5 748.6 L625.5 746.4 L625.5 744.2 L625.5 741.9 L625.5 739.7 L625.5 737.4 L625.5 735.1 L625.5 732.8 L625.5 730.5 L625.6 728.2 L625.6 725.8 L625.6 723.4 L625.6 721.1 L625.6 718.6 L625.6 716.2 L625.6 713.8 L625.6 711.3 L625.6 708.9 L625.6 706.4 L625.6 703.8 L625.5 701.3 L625.5 698.8 L625.5 696.2 L625.5 693.6 L625.5 691 L625.5 688.4 L625.5 685.7 L625.4 683 L625.4 680.3 L625.4 677.6 L625.4 674.9 L625.3 672.1 L625.3 669.3 L625.3 666.5 L625.2 663.7 L625.2 660.8 L625.2 657.9 L625.1 655 L625.1 652.1 L625 649.1 L625 646.1 L624.9 643.1 L624.8 640.1 L624.8 637 L624.7 633.9 L624.6 630.8 L624.5 627.6 L624.4 624.5 L624.4 621.2 L624.3 618 L624.2 614.7 L624.1 611.4 L623.9 608 L623.8 604.7 L623.7 601.3 L623.6 597.8 L623.4 594.3 L623.3 590.8 L623.1 587.2 L622.9 583.6 L622.8 580 L622.6 576.3 L622.4 572.6 L622.2 568.8 L622 565 L621.7 561.2 L621.5 557.3 L621.3 553.3 L621 549.3 L620.7 545.3 L620.4 541.2 L620.1 537.1 L619.8 532.9 L619.5 528.7 L619.1 524.4 L618.7 520 L618.3 515.6 L617.9 511.1 L617.5 506.6 L617 502 L616.5 497.3 L616 492.6 L615.4 487.8 L614.8 483 L614.2 478 L613.6 473 L612.9 467.9 L612.2 462.8 L611.4 457.5 L610.6 452.2 L609.8 446.8 L608.9 441.3 L607.9 435.7 L606.9 430 L605.8 424.2 L604.7 418.3 L603.5 412.3 L602.2 406.2 L600.8 400 L599.4 393.6 L597.9 387.2 L596.2 380.6 L594.5 373.8 L592.6 367 L590.6 360 L588.5 352.8 L586.3 345.5 L583.9 338 L581.3 330.4 L578.6 322.5 L575.6 314.5 L572.5 306.3 L569.1 297.8 L565.5 289.2 L561.7 280.3 L557.6 271.2 L553.2 261.8 L548.5 252.2 L543.5 242.2 L538.1 232 L532.5 221.4 L526.4 210.5 L520 199.2 L513.3 187.5 L506.1 175.4 L498.6 162.8 L490.7 149.8 L482.5 136.2 L473.9 122 L464.9 107.2 L455.6 91.7 L446 75.5 L436.1 58.4 L425.9 40.4 L415.4 21.3 L408.2 8M661.4 781.5 L661.5 780.2 L661.6 778.2 L661.7 776.1 L661.8 774.1 L661.9 772 L662 770 L662.1 767.9 L662.2 765.8 L662.3 763.7 L662.4 761.6 L662.5 759.5 L662.6 757.3 L662.8 755.2 L662.9 753 L663 750.8 L663.1 748.6 L663.2 746.4 L663.3 744.2 L663.4 741.9 L663.6 739.7 L663.7 737.4 L663.8 735.1 L663.9 732.8 L664 730.5 L664.2 728.2 L664.3 725.8 L664.4 723.4 L664.5 721.1 L664.6 718.6 L664.8 716.2 L664.9 713.8 L665 711.3 L665.1 708.9 L665.3 706.4 L665.4 703.8 L665.5 701.3 L665.7 698.8 L665.8 696.2 L665.9 693.6 L666 691 L666.2 688.4 L666.3 685.7 L666.4 683 L666.6 680.3 L666.7 677.6 L666.8 674.9 L667 672.1 L667.1 669.3 L667.2 666.5 L667.4 663.7 L667.5 660.8 L667.7 657.9 L667.8 655 L667.9 652.1 L668.1 649.1 L668.2 646.1 L668.3 643.1 L668.5 640.1 L668.6 637 L668.8 633.9 L668.9 630.8 L669 627.6 L669.2 624.5 L669.3 621.2 L669.5 618 L669.6 614.7 L669.7 611.4 L669.9 608 L670 604.7 L670.1 601.3 L670.3 597.8 L670.4 594.3 L670.5 590.8 L670.7 587.2 L670.8 583.6 L670.9 580 L671 576.3 L671.2 572.6 L671.3 568.8 L671.4 565 L671.5 561.2 L671.7 557.3 L671.8 553.3 L671.9 549.3 L672 545.3 L672.1 541.2 L672.2 537.1 L672.3 532.9 L672.4 528.7 L672.5 524.4 L672.5 520 L672.6 515.6 L672.7 511.1 L672.8 506.6 L672.8 502 L672.9 497.3 L672.9 492.6 L672.9 487.8 L673 483 L673 478 L673 473 L673 467.9 L672.9 462.8 L672.9 457.5 L672.9 452.2 L672.8 446.8 L672.7 441.3 L672.6 435.7 L672.5 430 L672.3 424.2 L672.1 418.3 L671.9 412.3 L671.7 406.2 L671.4 400 L671.2 393.6 L670.8 387.2 L670.4 380.6 L670 373.8 L669.6 367 L669 360 L668.5 352.8 L667.8 345.5 L667.1 338 L666.3 330.4 L665.4 322.5 L664.5 314.5 L663.4 306.3 L662.2 297.8 L660.9 289.2 L659.5 280.3 L657.8 271.2 L656 261.8 L654.1 252.2 L651.9 242.2 L649.4 232 L646.7 221.4 L643.7 210.5 L640.3 199.2 L636.6 187.5 L632.4 175.4 L627.8 162.8 L622.6 149.8 L616.9 136.2 L610.5 122 L603.4 107.2 L595.6 91.7 L587.1 75.5 L577.7 58.4 L567.5 40.4 L556.6 21.3 L548.8 8M697.6 781.5 L697.7 780.2 L697.9 778.2 L698 776.1 L698.2 774.1 L698.4 772 L698.6 770 L698.7 767.9 L698.9 765.8 L699.1 763.7 L699.3 761.6 L699.5 759.5 L699.6 757.3 L699.8 755.2 L700 753 L700.2 750.8 L700.4 748.6 L700.6 746.4 L700.8 744.2 L701 741.9 L701.2 739.7 L701.4 737.4 L701.6 735.1 L701.8 732.8 L702 730.5 L702.2 728.2 L702.4 725.8 L702.6 723.4 L702.8 721.1 L703 718.6 L703.3 716.2 L703.5 713.8 L703.7 711.3 L703.9 708.9 L704.2 706.4 L704.4 703.8 L704.6 701.3 L704.8 698.8 L705.1 696.2 L705.3 693.6 L705.6 691 L705.8 688.4 L706 685.7 L706.3 683 L706.5 680.3 L706.8 677.6 L707 674.9 L707.3 672.1 L707.6 669.3 L707.8 666.5 L708.1 663.7 L708.3 660.8 L708.6 657.9 L708.9 655 L709.2 652.1 L709.4 649.1 L709.7 646.1 L710 643.1 L710.3 640.1 L710.6 637 L710.9 633.9 L711.2 630.8 L711.5 627.6 L711.8 624.5 L712.1 621.2 L712.4 618 L712.7 614.7 L713 611.4 L713.3 608 L713.6 604.7 L713.9 601.3 L714.3 597.8 L714.6 594.3 L714.9 590.8 L715.3 587.2 L715.6 583.6 L715.9 580 L716.3 576.3 L716.6 572.6 L717 568.8 L717.3 565 L717.7 561.2 L718.1 557.3 L718.4 553.3 L718.8 549.3 L719.2 545.3 L719.6 541.2 L719.9 537.1 L720.3 532.9 L720.7 528.7 L721.1 524.4 L721.5 520 L721.9 515.6 L722.3 511.1 L722.7 506.6 L723.1 502 L723.6 497.3 L724 492.6 L724.4 487.8 L724.8 483 L725.2 478 L725.7 473 L726.1 467.9 L726.6 462.8 L727 457.5 L727.4 452.2 L727.9 446.8 L728.3 441.3 L728.8 435.7 L729.2 430 L729.7 424.2 L730.1 418.3 L730.6 412.3 L731 406.2 L731.5 400 L731.9 393.6 L732.4 387.2 L732.8 380.6 L733.3 373.8 L733.7 367 L734.1 360 L734.6 352.8 L735 345.5 L735.4 338 L735.7 330.4 L736.1 322.5 L736.5 314.5 L736.8 306.3 L737.1 297.8 L737.4 289.2 L737.6 280.3 L737.8 271.2 L738 261.8 L738.1 252.2 L738.1 242.2 L738.1 232 L738 221.4 L737.8 210.5 L737.5 199.2 L737 187.5 L736.4 175.4 L735.6 162.8 L734.6 149.8 L733.3 136.2 L731.8 122 L729.8 107.2 L727.4 91.7 L724.5 75.5 L720.9 58.4 L716.6 40.4 L711.3 21.3 L707.2 8M733.8 781.5 L733.9 780.2 L734.2 778.2 L734.4 776.1 L734.6 774.1 L734.8 772 L735 770 L735.3 767.9 L735.5 765.8 L735.7 763.7 L736 761.6 L736.2 759.5 L736.4 757.3 L736.7 755.2 L736.9 753 L737.2 750.8 L737.4 748.6 L737.7 746.4 L737.9 744.2 L738.2 741.9 L738.4 739.7 L738.7 737.4 L739 735.1 L739.2 732.8 L739.5 730.5 L739.8 728.2 L740 725.8 L740.3 723.4 L740.6 721.1 L740.9 718.6 L741.2 716.2 L741.4 713.8 L741.7 711.3 L742 708.9 L742.3 706.4 L742.6 703.8 L742.9 701.3 L743.2 698.8 L743.6 696.2 L743.9 693.6 L744.2 691 L744.5 688.4 L744.8 685.7 L745.2 683 L745.5 680.3 L745.8 677.6 L746.2 674.9 L746.5 672.1 L746.8 669.3 L747.2 666.5 L747.6 663.7 L747.9 660.8 L748.3 657.9 L748.6 655 L749 652.1 L749.4 649.1 L749.8 646.1 L750.2 643.1 L750.5 640.1 L750.9 637 L751.3 633.9 L751.7 630.8 L752.2 627.6 L752.6 624.5 L753 621.2 L753.4 618 L753.8 614.7 L754.3 611.4 L754.7 608 L755.2 604.7 L755.6 601.3 L756.1 597.8 L756.5 594.3 L757 590.8 L757.5 587.2 L758 583.6 L758.5 580 L759 576.3 L759.5 572.6 L760 568.8 L760.5 565 L761 561.2 L761.5 557.3 L762.1 553.3 L762.6 549.3 L763.2 545.3 L763.7 541.2 L764.3 537.1 L764.9 532.9 L765.5 528.7 L766.1 524.4 L766.7 520 L767.3 515.6 L767.9 511.1 L768.6 506.6 L769.2 502 L769.8 497.3 L770.5 492.6 L771.2 487.8 L771.9 483 L772.6 478 L773.3 473 L774 467.9 L774.7 462.8 L775.5 457.5 L776.2 452.2 L777 446.8 L777.8 441.3 L778.6 435.7 L779.4 430 L780.2 424.2 L781.1 418.3 L781.9 412.3 L782.8 406.2 L783.7 400 L784.6 393.6 L785.5 387.2 L786.4 380.6 L787.4 373.8 L788.3 367 L789.3 360 L790.3 352.8 L791.4 345.5 L792.4 338 L793.5 330.4 L794.6 322.5 L795.7 314.5 L796.8 306.3 L798 297.8 L799.1 289.2 L800.3 280.3 L801.5 271.2 L802.8 261.8 L804.1 252.2 L805.3 242.2 L806.6 232 L808 221.4 L809.3 210.5 L810.7 199.2 L812 187.5 L813.4 175.4 L814.8 162.8 L816.2 149.8 L817.6 136.2 L819 122 L820.3 107.2 L821.6 91.7 L822.9 75.5 L824 58.4 L825.1 40.4 L825.9 21.3 L826.4 8" stroke="#006800"/>
<path d="M390.5 806.4L946.9 14.6" stroke="#ff0000" stroke-width="2"/>
</g>
<g clip-path="url(#c2)">
<path d="M789.9 16.2V806.4M807.9 16.2V806.4M825.8 16.2V806.4M843.7 16.2V806.4M879.6 16.2V806.4M897.5 16.2V806.4M915.4 16.2V806.4M933.4 16.2V806.4M969.2 16.2V806.4M987.2 16.2V806.4M1005.1 16.2V806.4M1023 16.2V806.4M1058.9 16.2V806.4" stroke="#727272" stroke-width="1.9" fill="none"/>
<path d="M861.6 16.2V806.4M951.3 16.2V806.4M1041 16.2V806.4" stroke="#747474" stroke-width="3.4" fill="none"/>
<path d="M773.4 245.6H1074.6M773.4 380.7H1074.6M773.4 476.8H1074.6M773.4 550.4H1074.6M773.4 611.5H1074.6M773.4 662.8H1074.6M773.4 707.2H1074.6M773.4 747.2H1074.6M773.4 781.4H1074.6" stroke="#660000" stroke-width="1" fill="none"/>
</g>
<g clip-path="url(#c3)">
<path d="M1101.8 16.2V806.4M1117 16.2V806.4M1132.3 16.2V806.4M1147.5 16.2V806.4M1177.9 16.2V806.4M1193.1 16.2V806.4M1208.4 16.2V806.4M1223.6 16.2V806.4M1254 16.2V806.4M1269.2 16.2V806.4M1284.5 16.2V806.4M1299.7 16.2V806.4M1330.1 16.2V806.4M1345.3 16.2V806.4M1360.6 16.2V806.4M1375.8 16.2V806.4" stroke="#727272" stroke-width="1.9" fill="none"/>
<path d="M1162.7 16.2V806.4M1238.8 16.2V806.4M1314.9 16.2V806.4" stroke="#747474" stroke-width="3.4" fill="none"/>
<path d="M1087.6 245.6H1389.2M1087.6 380.7H1389.2M1087.6 476.8H1389.2M1087.6 550.4H1389.2M1087.6 611.5H1389.2M1087.6 662.8H1389.2M1087.6 707.2H1389.2M1087.6 747.2H1389.2M1087.6 781.4H1389.2" stroke="#660000" stroke-width="1" fill="none"/>
</g>
<rect x="44.1" y="240.4" width="22.4" height="10.4" fill="#000"/>
<text class="pl" x="55.6" y="249.3" text-anchor="middle">200</text>
<rect x="807.5" y="240.4" width="22.4" height="10.4" fill="#000"/>
<text class="pl" x="819" y="249.3" text-anchor="middle">200</text>
<rect x="1122.8" y="240.4" width="22.4" height="10.4" fill="#000"/>
<text class="pl" x="1134.3" y="249.3" text-anchor="middle">200</text>
<rect x="44.1" y="375.5" width="22.4" height="10.4" fill="#000"/>
<text class="pl" x="55.6" y="384.4" text-anchor="middle">300</text>
<rect x="807.5" y="375.5" width="22.4" height="10.4" fill="#000"/>
<text class="pl" x="819" y="384.4" text-anchor="middle">300</text>
<rect x="1122.8" y="375.5" width="22.4" height="10.4" fill="#000"/>
<text class="pl" x="1134.3" y="384.4" text-anchor="middle">300</text>
<rect x="44.1" y="471.6" width="22.4" height="10.4" fill="#000"/>
<text class="pl" x="55.6" y="480.5" text-anchor="middle">400</text>
<rect x="807.5" y="471.6" width="22.4" height="10.4" fill="#000"/>
<text class="pl" x="819" y="480.5" text-anchor="middle">400</text>
<rect x="1122.8" y="471.6" width="22.4" height="10.4" fill="#000"/>
<text class="pl" x="1134.3" y="480.5" text-anchor="middle">400</text>
<rect x="44.1" y="545.2" width="22.4" height="10.4" fill="#000"/>
<text class="pl" x="55.6" y="554.1" text-anchor="middle">500</text>
<rect x="807.5" y="545.2" width="22.4" height="10.4" fill="#000"/>
<text class="pl" x="819" y="554.1" text-anchor="middle">500</text>
<rect x="1122.8" y="545.2" width="22.4" height="10.4" fill="#000"/>
<text class="pl" x="1134.3" y="554.1" text-anchor="middle">500</text>
<rect x="44.1" y="606.3" width="22.4" height="10.4" fill="#000"/>
<text class="pl" x="55.6" y="615.2" text-anchor="middle">600</text>
<rect x="807.5" y="606.3" width="22.4" height="10.4" fill="#000"/>
<text class="pl" x="819" y="615.2" text-anchor="middle">600</text>
<rect x="1122.8" y="606.3" width="22.4" height="10.4" fill="#000"/>
<text class="pl" x="1134.3" y="615.2" text-anchor="middle">600</text>
<rect x="44.1" y="657.6" width="22.4" height="10.4" fill="#000"/>
<text class="pl" x="55.6" y="666.5" text-anchor="middle">700</text>
<rect x="807.5" y="657.6" width="22.4" height="10.4" fill="#000"/>
<text class="pl" x="819" y="666.5" text-anchor="middle">700</text>
<rect x="1122.8" y="657.6" width="22.4" height="10.4" fill="#000"/>
<text class="pl" x="1134.3" y="666.5" text-anchor="middle">700</text>
<rect x="44.1" y="702" width="22.4" height="10.4" fill="#000"/>
<text class="pl" x="55.6" y="710.9" text-anchor="middle">800</text>
<rect x="807.5" y="702" width="22.4" height="10.4" fill="#000"/>
<text class="pl" x="819" y="710.9" text-anchor="middle">800</text>
<rect x="1122.8" y="702" width="22.4" height="10.4" fill="#000"/>
<text class="pl" x="1134.3" y="710.9" text-anchor="middle">800</text>
<rect x="44.1" y="742" width="22.4" height="10.4" fill="#000"/>
<text class="pl" x="55.6" y="750.9" text-anchor="middle">900</text>
<rect x="807.5" y="742" width="22.4" height="10.4" fill="#000"/>
<text class="pl" x="819" y="750.9" text-anchor="middle">900</text>
<rect x="1122.8" y="742" width="22.4" height="10.4" fill="#000"/>
<text class="pl" x="1134.3" y="750.9" text-anchor="middle">900</text>
<rect x="40.8" y="776.2" width="29" height="10.4" fill="#000"/>
<text class="pl" x="55.6" y="785.1" text-anchor="middle">1000</text>
<rect x="804.2" y="776.2" width="29" height="10.4" fill="#000"/>
<text class="pl" x="819" y="785.1" text-anchor="middle">1000</text>
<rect x="1119.5" y="776.2" width="29" height="10.4" fill="#000"/>
<text class="pl" x="1134.3" y="785.1" text-anchor="middle">1000</text>
<rect x="52.2" y="341.8" width="19.5" height="10.4" fill="#000"/>
<text class="tl" x="62.2" y="350.7" text-anchor="middle">-90</text>
<rect x="124.6" y="341.8" width="19.5" height="10.4" fill="#000"/>
<text class="tl" x="134.6" y="350.7" text-anchor="middle">-80</text>
<rect x="197" y="341.8" width="19.5" height="10.4" fill="#000"/>
<text class="tl" x="207" y="350.7" text-anchor="middle">-70</text>
<rect x="269.4" y="341.8" width="19.5" height="10.4" fill="#000"/>
<text class="tl" x="279.4" y="350.7" text-anchor="middle">-60</text>
<rect x="341.8" y="341.8" width="19.5" height="10.4" fill="#000"/>
<text class="tl" x="351.8" y="350.7" text-anchor="middle">-50</text>
<rect x="414.2" y="341.8" width="19.5" height="10.4" fill="#000"/>
<text class="tl" x="424.2" y="350.7" text-anchor="middle">-40</text>
<rect x="486.6" y="341.8" width="19.5" height="10.4" fill="#000"/>
<text class="tl" x="496.6" y="350.7" text-anchor="middle">-30</text>
<rect x="559" y="341.8" width="19.5" height="10.4" fill="#000"/>
<text class="tl" x="569" y="350.7" text-anchor="middle">-20</text>
<rect x="631.4" y="341.8" width="19.5" height="10.4" fill="#000"/>
<text class="tl" x="641.4" y="350.7" text-anchor="middle">-10</text>
<rect x="776.1" y="59.9" width="20.4" height="10.4" fill="#000"/>
<text class="g" x="786.3" y="68.8" text-anchor="middle">500</text>
<rect x="1090.8" y="59.9" width="20.4" height="10.4" fill="#000"/>
<text class="g" x="1101" y="68.8" text-anchor="middle">500</text>
<rect x="12.7" y="138.4" width="20.4" height="13" fill="#000"/>
<text class="g" x="22.9" y="148.6" text-anchor="middle">450</text>
<rect x="776.1" y="139.7" width="20.4" height="10.4" fill="#000"/>
<text class="g" x="786.3" y="148.6" text-anchor="middle">450</text>
<rect x="1090.8" y="139.7" width="20.4" height="10.4" fill="#000"/>
<text class="g" x="1101" y="148.6" text-anchor="middle">450</text>
<rect x="12.7" y="218.5" width="20.4" height="13" fill="#000"/>
<text class="g" x="22.9" y="228.7" text-anchor="middle">400</text>
<rect x="776.1" y="219.8" width="20.4" height="10.4" fill="#000"/>
<text class="g" x="786.3" y="228.7" text-anchor="middle">400</text>
<rect x="1090.8" y="219.8" width="20.4" height="10.4" fill="#000"/>
<text class="g" x="1101" y="228.7" text-anchor="middle">400</text>
<rect x="12.7" y="298.2" width="20.4" height="13" fill="#000"/>
<text class="g" x="22.9" y="308.4" text-anchor="middle">350</text>
<rect x="776.1" y="299.5" width="20.4" height="10.4" fill="#000"/>
<text class="g" x="786.3" y="308.4" text-anchor="middle">350</text>
<rect x="1090.8" y="299.5" width="20.4" height="10.4" fill="#000"/>
<text class="g" x="1101" y="308.4" text-anchor="middle">350</text>
<rect x="12.7" y="374.8" width="20.4" height="13" fill="#000"/>
<text class="g" x="22.9" y="385" text-anchor="middle">300</text>
<rect x="776.1" y="376.1" width="20.4" height="10.4" fill="#000"/>
<text class="g" x="786.3" y="385" text-anchor="middle">300</text>
<rect x="1090.8" y="376.1" width="20.4" height="10.4" fill="#000"/>
<text class="g" x="1101" y="385" text-anchor="middle">300</text>
<rect x="12.7" y="449.4" width="20.4" height="13" fill="#000"/>
<text class="g" x="22.9" y="459.6" text-anchor="middle">250</text>
<rect x="776.1" y="450.7" width="20.4" height="10.4" fill="#000"/>
<text class="g" x="786.3" y="459.6" text-anchor="middle">250</text>
<rect x="1090.8" y="450.7" width="20.4" height="10.4" fill="#000"/>
<text class="g" x="1101" y="459.6" text-anchor="middle">250</text>
<rect x="12.7" y="520.9" width="20.4" height="13" fill="#000"/>
<text class="g" x="22.9" y="531.1" text-anchor="middle">200</text>
<rect x="776.1" y="522.2" width="20.4" height="10.4" fill="#000"/>
<text class="g" x="786.3" y="531.1" text-anchor="middle">200</text>
<rect x="1090.8" y="522.2" width="20.4" height="10.4" fill="#000"/>
<text class="g" x="1101" y="531.1" text-anchor="middle">200</text>
<rect x="12.7" y="588.8" width="20.4" height="13" fill="#000"/>
<text class="g" x="22.9" y="599" text-anchor="middle">150</text>
<rect x="776.1" y="590.1" width="20.4" height="10.4" fill="#000"/>
<text class="g" x="786.3" y="599" text-anchor="middle">150</text>
<rect x="1090.8" y="590.1" width="20.4" height="10.4" fill="#000"/>
<text class="g" x="1101" y="599" text-anchor="middle">150</text>
<rect x="12.7" y="654.9" width="20.4" height="13" fill="#000"/>
<text class="g" x="22.9" y="665.1" text-anchor="middle">100</text>
<rect x="776.1" y="656.2" width="20.4" height="10.4" fill="#000"/>
<text class="g" x="786.3" y="665.1" text-anchor="middle">100</text>
<rect x="1090.8" y="656.2" width="20.4" height="10.4" fill="#000"/>
<text class="g" x="1101" y="665.1" text-anchor="middle">100</text>
<rect x="15.7" y="718.5" width="14.4" height="13" fill="#000"/>
<text class="g" x="22.9" y="728.7" text-anchor="middle">50</text>
<rect x="779.1" y="719.8" width="14.4" height="10.4" fill="#000"/>
<text class="g" x="786.3" y="728.7" text-anchor="middle">50</text>
<rect x="1093.8" y="719.8" width="14.4" height="10.4" fill="#000"/>
<text class="g" x="1101" y="728.7" text-anchor="middle">50</text>
<rect x="18.7" y="780.4" width="8.4" height="13" fill="#000"/>
<text class="g" x="22.9" y="790.6" text-anchor="middle">0</text>
<rect x="782.1" y="781.7" width="8.4" height="10.4" fill="#000"/>
<text class="g" x="786.3" y="790.6" text-anchor="middle">0</text>
<rect x="1096.8" y="781.7" width="8.4" height="10.4" fill="#000"/>
<text class="g" x="1101" y="790.6" text-anchor="middle">0</text>
<rect x="1061.2" y="20.8" width="10" height="13" fill="#000"/>
<text class="g" x="1067.5" y="31" text-anchor="middle">16</text>
<rect x="1377" y="20.8" width="11" height="13" fill="#000"/>
<text class="g" x="1382.2" y="31" text-anchor="middle">16</text>
<rect x="1061.2" y="72.9" width="10" height="13" fill="#000"/>
<text class="g" x="1067.5" y="83.1" text-anchor="middle">15</text>
<rect x="1377" y="72.9" width="11" height="13" fill="#000"/>
<text class="g" x="1382.2" y="83.1" text-anchor="middle">15</text>
<rect x="1061.2" y="125" width="10" height="13" fill="#000"/>
<text class="g" x="1067.5" y="135.2" text-anchor="middle">14</text>
<rect x="1377" y="125" width="11" height="13" fill="#000"/>
<text class="g" x="1382.2" y="135.2" text-anchor="middle">14</text>
<rect x="1061.2" y="178.4" width="10" height="13" fill="#000"/>
<text class="g" x="1067.5" y="188.6" text-anchor="middle">13</text>
<rect x="1377" y="178.4" width="11" height="13" fill="#000"/>
<text class="g" x="1382.2" y="188.6" text-anchor="middle">13</text>
<rect x="1061.2" y="229.4" width="10" height="13" fill="#000"/>
<text class="g" x="1067.5" y="239.6" text-anchor="middle">12</text>
<rect x="1377" y="229.4" width="11" height="13" fill="#000"/>
<text class="g" x="1382.2" y="239.6" text-anchor="middle">12</text>
<rect x="1061.2" y="282" width="10" height="13" fill="#000"/>
<text class="g" x="1067.5" y="292.2" text-anchor="middle">11</text>
<rect x="1377" y="282" width="11" height="13" fill="#000"/>
<text class="g" x="1382.2" y="292.2" text-anchor="middle">11</text>
<rect x="1061.2" y="334.1" width="10" height="13" fill="#000"/>
<text class="g" x="1067.5" y="344.3" text-anchor="middle">10</text>
<rect x="1377" y="334.1" width="11" height="13" fill="#000"/>
<text class="g" x="1382.2" y="344.3" text-anchor="middle">10</text>
<rect x="1061.2" y="382.1" width="10" height="13" fill="#000"/>
<text class="g" x="1067.5" y="392.3" text-anchor="middle">9</text>
<rect x="1377" y="382.1" width="11" height="13" fill="#000"/>
<text class="g" x="1382.2" y="392.3" text-anchor="middle">9</text>
<rect x="1061.2" y="431.2" width="10" height="13" fill="#000"/>
<text class="g" x="1067.5" y="441.4" text-anchor="middle">8</text>
<rect x="1377" y="431.2" width="11" height="13" fill="#000"/>
<text class="g" x="1382.2" y="441.4" text-anchor="middle">8</text>
<rect x="1061.2" y="478.7" width="10" height="13" fill="#000"/>
<text class="g" x="1067.5" y="488.9" text-anchor="middle">7</text>
<rect x="1377" y="478.7" width="11" height="13" fill="#000"/>
<text class="g" x="1382.2" y="488.9" text-anchor="middle">7</text>
<rect x="1061.2" y="524.8" width="10" height="13" fill="#000"/>
<text class="g" x="1067.5" y="535" text-anchor="middle">6</text>
<rect x="1377" y="524.8" width="11" height="13" fill="#000"/>
<text class="g" x="1382.2" y="535" text-anchor="middle">6</text>
<rect x="1061.2" y="570.1" width="10" height="13" fill="#000"/>
<text class="g" x="1067.5" y="580.3" text-anchor="middle">5</text>
<rect x="1377" y="570.1" width="11" height="13" fill="#000"/>
<text class="g" x="1382.2" y="580.3" text-anchor="middle">5</text>
<rect x="1061.2" y="613.9" width="10" height="13" fill="#000"/>
<text class="g" x="1067.5" y="624.1" text-anchor="middle">4</text>
<rect x="1377" y="613.9" width="11" height="13" fill="#000"/>
<text class="g" x="1382.2" y="624.1" text-anchor="middle">4</text>
<rect x="1061.2" y="656.3" width="10" height="13" fill="#000"/>
<text class="g" x="1067.5" y="666.5" text-anchor="middle">3</text>
<rect x="1377" y="656.3" width="11" height="13" fill="#000"/>
<text class="g" x="1382.2" y="666.5" text-anchor="middle">3</text>
<rect x="1061.2" y="699" width="10" height="13" fill="#000"/>
<text class="g" x="1067.5" y="709.2" text-anchor="middle">2</text>
<rect x="1377" y="699" width="11" height="13" fill="#000"/>
<text class="g" x="1382.2" y="709.2" text-anchor="middle">2</text>
<rect x="1061.2" y="740.2" width="10" height="13" fill="#000"/>
<text class="g" x="1067.5" y="750.4" text-anchor="middle">1</text>
<rect x="1377" y="740.2" width="11" height="13" fill="#000"/>
<text class="g" x="1382.2" y="750.4" text-anchor="middle">1</text>
<rect x="1061.2" y="780.4" width="10" height="13" fill="#000"/>
<text class="g" x="1067.5" y="790.6" text-anchor="middle">0</text>
<rect x="1377" y="780.4" width="11" height="13" fill="#000"/>
<text class="g" x="1382.2" y="790.6" text-anchor="middle">0</text>
<rect x="818.6" y="17.4" width="15.4" height="10.4" fill="#000"/>
<text class="w" x="826.4" y="26.3" text-anchor="middle">30</text>
<rect x="872.4" y="17.4" width="15.4" height="10.4" fill="#000"/>
<text class="w" x="880.2" y="26.3" text-anchor="middle">60</text>
<rect x="926.2" y="17.4" width="15.4" height="10.4" fill="#000"/>
<text class="w" x="934" y="26.3" text-anchor="middle">90</text>
<rect x="976.9" y="17.4" width="21.6" height="10.4" fill="#000"/>
<text class="w" x="987.8" y="26.3" text-anchor="middle">120</text>
<rect x="1030.7" y="17.4" width="21.6" height="10.4" fill="#000"/>
<text class="w" x="1041.5" y="26.3" text-anchor="middle">150</text>
<rect x="1033" y="33" width="17" height="10.4" fill="#000"/>
<text class="w" x="1041.6" y="41.9" text-anchor="middle">[kt]</text>
<rect x="1158.6" y="17.4" width="9.2" height="10.4" fill="#000"/>
<text class="w" x="1163.1" y="26.3" text-anchor="middle">5</text>
<rect x="1231.6" y="17.4" width="15.4" height="10.4" fill="#000"/>
<text class="w" x="1239.2" y="26.3" text-anchor="middle">10</text>
<rect x="1307.7" y="17.4" width="15.4" height="10.4" fill="#000"/>
<text class="w" x="1315.3" y="26.3" text-anchor="middle">15</text>
<rect x="1344" y="33" width="32.5" height="10.4" fill="#000"/>
<text class="w" x="1360.5" y="41.9" text-anchor="middle">[kt/kft]</text>
<g clip-path="url(#c1b)" fill="none" stroke-linejoin="round" stroke-linecap="round">
<path d="M453.8 780 L455.2 766 L453.5 757.8 L452.9 757.1 L441.4 753.1 L427.1 750.7 L398.6 749.3 L381.4 748.1 L355.7 746.9 L327.1 746.1 L298.6 745.7 L281.4 745 L288.6 744 L305.7 743.3 L355.7 742.6 L410 742.1 L452 741.2 L412.5 740.6 L412.5 739 L445 738.4 L447.1 732.9 L448 727 L449.6 721 L448.5 712 L449 700 L447 692 L445.2 684 L443.1 671.4 L438.9 667.2 L433.3 660.2 L429 653.8 L422.7 651 L412.2 649.6 L413.6 641.9 L415.7 635.6 L417.8 631.3 L417.1 628.5 L413.6 625 L406.6 623.3 L400.2 621.5 L384.1 619.4 L405.2 617.3 L386.9 615.2 L391.1 611.6 L393.9 608.8 L386.2 605.3 L405.9 601.8 L403.8 599 L405.2 594.1 L406.8 590.5 L402.3 587 L402.4 583.9 L405.9 578.3 L398.9 576.9 L393.3 572.7 L390.5 565.6 L391.2 560 L393.3 556.5 L390.5 552.3 L381.3 550.2 L381.3 546.7 L386.3 538.9 L390.5 530.5 L394 519.2 L389.1 517.1 L386.3 511.5 L376.4 508 L365.9 503.8 L365.2 500.2 L373.6 497.4 L363.8 493.2 L359.5 490.4 L362.3 485.5 L360.2 479.8 L351.1 477.7 L348.9 474.6 L339.1 471.8 L350.3 466.9 L358.1 464.1 L348.9 460.6 L344 459.2 L352.4 452.1 L352.4 445.8 L346.8 441.6 L347.5 438.1 L352.4 433.1 L348.9 426.1 L352.9 418.4 L347.5 415.6 L344 407.8 L334.2 405 L325 399.4 L325 394.5 L317.3 392.3 L305.3 386.7 L301.1 385.3 L303.9 382.5 L300.4 379.7 L301.8 376.9 L298.3 372 L288.4 369.1 L281.9 364.6 L267.8 363.2 L274.9 356.9 L277.7 350.6 L269.9 347 L267.8 340 L269.2 333 L274.2 326.7 L281.9 320.3 L290.3 314.7 L294.5 309.1 L293.8 304.1 L287.5 299.9 L281.2 298.5 L279.8 292.2 L274.2 284.5 L272 275.3 L269.2 268.3 L270.6 264.1 L274.2 259.8 L267.8 256.3 L260.8 254.6 L250.2 251.8 L247.4 249 L253.8 241.3 L255.2 237 L253.1 229.3 L245.3 224.4 L238.3 218.1 L231.3 210.3 L226.3 201.9 L225.6 198.4 L229.8 189.2 L231.3 179.4 L238.3 173.1 L239.7 166 L242.5 156.9 L243.9 151.3 L247.5 147.4 L257.7 132.2 L269.6 110.1 L279.7 89.7 L288.2 74.5 L296.7 57.5 L300.1 47.3 L308.6 36.3 L318.8 26.1 L323 17.6" stroke="#e8e800" stroke-width="1.2" stroke-dasharray="2.6 2.7" stroke-linecap="butt"/>
<path d="M453.8 780 L456 774.4 L455.2 766 L453.8 757.5 L456.7 754 L464.4 749.8 L471.4 747.7 L478.5 744.1 L477.7 742 L473.5 740.6 L475.6 737.8 L472.8 732.2 L467.2 726.6 L463 721.6 L458.1 716.7 L453.1 712.5 L451.7 710.4 L453.1 708.7 L459.5 707.3 L458.8 704 L456 700.5 L451.7 696.3 L450.2 693.5 L449.5 686.9 L447.4 678.5 L446 671.4 L442.4 666.5 L439.6 658.8 L436.8 650.3 L431.9 642.6 L425.6 636.3 L420.6 632 L417.1 628.5 L419.2 624.3 L426.3 622.2 L431.9 620.8 L429.8 617.3 L427.7 613.8 L425.6 608.1 L426.3 601.1 L427.7 594.1 L429.8 588.4 L429.2 585.3 L425.6 574.1 L420 565.6 L414.4 558.6 L411.6 553 L414.4 550.9 L421.4 549.9 L420 544.5 L417.9 536.1 L413 530.5 L408.8 524.9 L405.2 519.2 L407.1 515.7 L409.5 514.3 L409.5 508 L410.9 502.3 L410.2 495.3 L408.1 489.7 L404.5 484.1 L400.3 477.7 L398.1 474.6 L393.9 464.1 L391.1 455.6 L384.1 445.8 L379.2 435.9 L377 426.1 L374.9 416.3 L373.5 405 L369.3 395.2 L367.2 385.3 L363 375.5 L358.8 365.6 L354.3 361.1 L352.2 354.1 L347.3 347 L343.1 337.2 L339.5 328.8 L332.5 320.3 L327.6 311.9 L322.7 303.4 L320.6 293.6 L317 283.8 L313.5 273.9 L312.8 264.1 L316.3 259.1 L320.6 255.6 L329 252.5 L330.4 246.9 L335.3 239.9 L336.7 235.6 L346.6 230.7 L355 225.8 L363.5 220.9 L367 215.9 L367.7 206.1 L367.7 204.8 L375.5 199.2 L386.7 194.9 L396.6 192.1 L402.2 187.9 L405 183.7 L412 179.5 L412 174.5 L410.6 171.7 L412 167.5 L417.7 163.3 L417.9 155.6 L425.4 151.3 L427.5 146.4 L433.1 140.1 L436.7 132.3 L443.7 128.1 L444.8 122 L446.4 118.3 L455.6 108.5 L460.5 97.2 L465.4 87.4 L465.4 81 L463.3 76.1 L468.2 70.5 L468.2 53.6 L476.7 42.3 L488.6 34.6 L501.3 31.8 L511.8 29 L514.2 23.4 L512.5 16.3" stroke="#ffff00" stroke-width="2.3"/>
</g>
<g clip-path="url(#c1b)">
<path d="M686 210.6L692.8 196L701 210.6ZM688.4 233.6L690.1 217.6L702.6 228.7ZM688.3 270.6L693.6 255.4L703.2 269.1ZM688.4 291.2L690.1 275.2L702.6 286.4ZM688.3 305.8L690.2 289.8L702.5 301.2ZM688.4 447.3L690.1 431.3L702.6 442.5ZM691.8 467.2L689.3 451.3L704.3 458.9ZM688.5 476.3L689.9 460.3L702.6 471.2ZM688.5 489.6L689.9 473.6L702.6 484.5ZM688.6 503.4L689.9 487.4L702.7 498.2ZM688.6 516.8L689.9 500.8L702.7 511.6Z" fill="#ffff00" stroke="#ffff00" stroke-width="0.8" stroke-linejoin="round"/>
<path d="M734.1 40.9L689.3 40.9M689.3 40.9L689.3 26.2M696.7 40.9L696.7 26.2M704.1 40.9L704.1 26.2M711.5 40.9L711.5 26.2M718.9 40.9L718.9 33.5M731.4 51.7L692 66.7M692 66.7L686.9 53.2M698.4 64.2L693.3 50.7M704.9 61.8L699.8 48.3M711.3 59.3L706.2 45.9M731.8 73.6L691.6 77.6M691.6 77.6L690.3 64.2M698.6 76.9L697.2 63.5M705.5 76.2L704.2 62.8M712.5 75.5L711.8 68.8M731.8 90.3L691.6 94.1M691.6 94.1L690.3 80.7M698.6 93.5L697.3 80M705.5 92.8L704.2 79.4M712.5 92.1L711.8 85.4M731.8 105.3L691.6 108.7M691.6 108.7L690.4 95.2M698.5 108.1L697.4 94.7M705.5 107.5L704.4 94.1M712.5 106.9L711.4 93.5M734.1 122.4L689.3 122.4M689.3 122.4L689.3 107.7M696.7 122.4L696.7 107.7M704.1 122.4L704.1 107.7M711.5 122.4L711.5 107.7M718.9 122.4L718.9 115.1M731.8 134.9L691.6 139.1M691.6 139.1L690.2 125.7M698.6 138.4L697.2 125M705.5 137.6L704.1 124.2M712.5 136.9L711.1 123.5M719.5 136.2L718.8 129.5M728.6 137.7L694.8 162.9M694.8 162.9L686.2 151.4M700.3 158.8L691.7 147.2M705.8 154.7L697.2 143.1M711.4 150.5L702.8 139M731.6 156.5L691.8 170.7M691.8 170.7L687 157.2M698.3 168.4L693.5 154.8M704.8 166.1L700 152.5M731.6 172.2L691.8 186.4M691.8 186.4L687 172.9M698.3 184.1L693.5 170.5M704.8 181.8L700 168.2M731.8 193L691.6 197.2M691.6 197.2L690.2 183.8M698.6 196.5L697.2 183.1M705.5 195.7L704.1 182.3M712.5 195L711.8 188.3M737.5 210.6L686 210.6M735 217.6L688.4 233.6M706.9 227.2L704.6 220.4M728.8 226.5L694.6 251.1M694.6 251.1L686.2 239.4M700.2 247.1L691.8 235.4M705.8 243.1L697.4 231.4M711.4 239L703 227.3M717 235L712.8 229.2M728.6 240.4L694.8 265.8M694.8 265.8L686.2 254.3M700.4 261.6L691.7 250.1M705.9 257.5L697.2 246M711.4 253.3L702.7 241.8M735.1 265.8L688.3 270.6M735 275.4L688.4 291.2M735.1 290.6L688.3 305.8M731.6 305.2L691.8 319.2M691.8 319.2L687 305.7M698.3 316.9L693.5 303.4M704.8 314.6L700 301.1M711.3 312.3L706.5 298.8M717.8 310L715.4 303.2M731.5 318.8L691.9 333.2M691.9 333.2L686.9 319.7M698.4 330.9L693.4 317.3M704.8 328.5L699.9 315M711.3 326.1L706.4 312.6M717.8 323.8L715.3 317M731.6 331.8L691.8 345.8M691.8 345.8L687 332.3M698.3 343.5L693.5 330M704.8 341.2L700 327.7M711.3 338.9L706.5 325.4M717.8 336.6L715.4 329.8M731.6 345.9L691.8 359.9M691.8 359.9L687 346.4M698.3 357.6L693.5 344.1M704.8 355.3L700 341.8M711.3 353L706.5 339.5M717.8 350.7L715.4 343.9M731.6 359.8L691.8 373.8M691.8 373.8L687 360.3M698.3 371.5L693.5 358M704.8 369.2L700 355.7M711.3 366.9L706.5 353.4M717.8 364.6L715.4 357.8M731.8 378.3L691.6 381.7M691.6 381.7L690.5 368.2M698.5 381.1L697.4 367.6M705.5 380.5L704.4 367.1M712.5 379.9L711.4 366.5M719.5 379.4L718.9 372.6M731.8 393.8L691.6 397.4M691.6 397.4L690.4 383.9M698.6 396.8L697.4 383.3M705.5 396.1L704.3 382.7M712.5 395.5L711.3 382.1M731.4 403.4L692 418.6M692 418.6L686.8 405.1M698.4 416.1L693.3 402.6M704.9 413.6L699.7 400.2M711.3 411.1L706.2 397.7M717.8 408.7L715.2 401.9M731.4 416.8L692 432M692 432L686.8 418.5M698.4 429.5L693.3 416M704.9 427L699.7 413.6M711.3 424.5L706.2 411.1M717.8 422.1L715.2 415.3M735 431.5L688.4 447.3M731.6 440.6L691.8 467.2M734.9 459.5L688.5 476.3M707 469.6L704.5 462.8M734.9 472.8L688.5 489.6M734.8 486.2L688.6 503.4M734.8 499.6L688.6 516.8M731.5 514L691.9 528.4M691.9 528.4L686.9 514.9M698.4 526.1L693.4 512.5M704.8 523.7L699.9 510.2M711.3 521.3L706.4 507.8M731.8 532.4L691.6 535.8M691.6 535.8L690.5 522.3M698.5 535.2L697.4 521.7M705.5 534.6L704.4 521.2M712.5 534L711.9 527.3M731.8 545.9L691.6 549.7M691.6 549.7L690.3 536.3M698.6 549.1L697.3 535.6M705.5 548.4L704.2 535M734.1 562.1L689.3 562.1M689.3 562.1L689.3 547.4M696.7 562.1L696.7 547.4M704.1 562.1L704.1 547.4M731.8 574.3L691.6 578.1M691.6 578.1L690.3 564.7M698.6 577.5L697.3 564M705.5 576.8L704.9 570.1M731.8 587.8L691.6 591.6M691.6 591.6L690.3 578.2M698.6 591L697.3 577.5M731.6 596.5L691.8 610.5M691.8 610.5L687 597M698.3 608.2L693.5 594.7M731.8 615.3L691.6 619.5M691.6 619.5L690.2 606.1M698.6 618.8L697.9 612.1M731.5 623.8L691.9 638.2M691.9 638.2L686.9 624.7M698.4 635.9L693.4 622.3M704.8 633.5L702.4 626.7M731.5 637.2L691.9 651.6M691.9 651.6L686.9 638.1M698.4 649.3L693.4 635.7M704.8 646.9L702.4 640.1M731.5 651.1L691.9 665.5M691.9 665.5L686.9 652M698.4 663.2L693.4 649.6M731.8 668.7L691.6 672.9M691.6 672.9L690.2 659.5M698.6 672.2L697.2 658.8M731.8 682.6L691.6 686.8M691.6 686.8L690.2 673.4M698.6 686.1L697.2 672.7M731.8 695.9L691.6 700.1M691.6 700.1L690.2 686.7M698.6 699.4L697.2 686M734.1 711.1L689.3 711.1M689.3 711.1L689.3 696.4M696.7 711.1L696.7 696.4M734.1 725L689.3 725M689.3 725L689.3 710.3M696.7 725L696.7 710.3M734.1 738.8L689.3 738.8M689.3 738.8L689.3 724.1M696.7 738.8L696.7 724.1M731.3 760.2L692.1 744.4M692.1 744.4L697.5 731M698.5 747L701.2 740.3M734.1 765.7L689.3 765.7M689.3 765.7L689.3 751M688.6 765.7L703.2 806" fill="none" stroke="#ffff00" stroke-width="1.7" stroke-linecap="round"/>
</g>
<g clip-path="url(#c2)"><path d="M835.4 16.4 L840.3 27.3 L847.6 33.4 L853.6 40.7 L847.6 46.7 L847.1 52.8 L840.3 58.8 L833.5 64.9 L831.1 78.2 L833.5 89.1 L837.9 98.8 L847.6 111 L854.8 119.4 L860.9 127.4 L853.6 135.2 L848.8 142.5 L845.1 152.2 L842.2 154.1 L847.6 164.3 L842.7 169.1 L833 175.2 L824.5 181.2 L822.1 186.1 L827 192.1 L842.7 200.6 L854.8 206.1 L873 218.2 L865.7 231.5 L856 236.8 L855.3 252.1 L859.7 259.4 L867 265.4 L864 272.7 L863.3 284.8 L860.9 295.7 L854.8 304.2 L853.6 311.5 L855.3 321.2 L857.3 328.5 L855.3 338.2 L854.3 349.1 L849.5 355.1 L850 363.6 L852.4 370.9 L851.2 379.4 L848.8 390 L845.6 402.1 L851.2 414.2 L853.6 423.9 L860.9 433.6 L863.3 442.1 L867.7 447 L862.1 455.4 L864.5 462.7 L873 474.8 L864.5 479.7 L865 490.6 L860.9 496.6 L856 500.3 L860.9 506.8 L851.2 513.6 L840.3 522.1 L833.5 530.6 L835.4 535.4 L827 542.7 L827 550 L822.1 557.2 L823.3 563.3 L819.7 571.8 L814.8 581.5 L809 593.9 L811.8 599.5 L805.7 607.9 L804.8 614.8 L800.1 621.3 L811.8 628.8 L813.2 637.2 L812.4 646.9 L807.6 653 L805.7 661.4 L812.4 669.2 L813.2 677.6 L811.3 685.4 L802.9 690.1 L809 695.7 L811.3 708.2 L811.3 716.6 L807.6 722.2 L806.2 731.9 L806.8 744.5 L799.3 750.1 L789.5 759.8 L793.7 767.3 L790.9 776.5 L786.7 780.7 L779.8 784.9" fill="none" stroke="#ffff00" stroke-width="3.1" stroke-linejoin="round" stroke-linecap="round"/></g>
<g clip-path="url(#c3)" fill="none" stroke-width="3.3" stroke-linecap="round">
<path d="M1139.6 22.5L1139.2 28.6M1126.3 29.3L1125.9 34.6M1150 29.7L1149.6 40.7M1157.3 35.1L1156.9 46.7M1168.7 41.9L1168.3 52.8M1164.6 47.9L1164.2 58.9M1174.3 53.5L1173.9 64.9M1151.7 59.6L1151.3 70.5M1145.7 65.4L1145.3 75.3M1127.5 71.4L1127.1 81.2M1135.5 77L1135.1 85.5M1137.9 76.3L1137.5 97.2M1145.2 81.9L1144.8 102.5M1169.4 87.2L1169 106.9M1184.9 93.3L1184.5 112.2M1197 98.1L1196.6 117.5M1175.2 103L1174.8 121.9M1138.4 108L1138 127.2M1132.3 112.9L1131.9 131.6M1134 118.2L1133.6 136.4M1211.6 123.1L1211.2 140.8M1263.2 127.9L1262.8 146.1M1240.9 132.3L1240.5 150.5M1213.5 137.6L1213.1 154.1M1199.5 141.7L1199.1 158.3M1183.2 146.8L1182.8 163.1M1174.3 151L1173.9 171.6M1201.9 159.4L1201.5 175.7M1223.2 164.3L1222.8 179.6M1193.7 168.4L1193.3 195.1M1177.2 172.8L1176.8 192.2M1217.2 184.2L1216.8 199.5M1242.1 188.5L1241.7 203.8M1263.2 192.9L1262.8 206.7M1260.8 199.4L1260.4 215.2M1249.9 204.3L1249.5 215.2M1238.3 207.4L1237.9 215.2M1224.4 210.4L1224 215.2" stroke="#ffff00"/>
<path d="M1262.5 196.4L1262.1 213.3M1249.9 204.8L1249.5 217.7M1242.1 198.8L1241.7 203.6M1224.4 210.9L1224 225M1237.8 208.5L1237.4 235.2M1239 207.3L1238.6 242M1240.2 215.7L1239.8 232.7M1120.2 236.4L1119.8 248.5M1184.9 232.7L1184.5 258.9M1168.7 239.5L1168.3 252.1M1190.5 242.9L1190.1 255.8M1151.7 246L1151.3 271.5M1155.8 249.7L1155.4 276.4M1149.3 253.3L1148.9 271.5M1153.4 257L1153 266.7M1166.3 263L1165.9 280.7M1123.4 265.4L1123 283.2M1110.5 269.1L1110.1 286.1M1145.2 272.2L1144.8 289M1159 273.9L1158.6 294.6M1161.4 276.4L1161 295.3M1156.6 281.2L1156.2 298.2M1138.4 283.6L1138 300.6M1134 288L1133.6 312.7M1129.9 289.7L1129.5 309.1M1127.5 290.9L1127.1 305.5M1136.4 292.1L1136 307.9M1131.6 293.3L1131.2 310.3M1116.6 301.8L1116.2 317.6M1094.7 303L1094.3 320M1099.1 306.7L1098.7 322.4M1105.7 310.3L1105.3 327.3M1103.2 313.9L1102.8 334.6M1094.7 323.6L1094.3 340.6M1102 327.3L1101.6 343M1108.1 333.3L1107.7 346.7M1114.6 330.9L1114.2 354M1111.2 341.8L1110.8 358.8M1121.9 339.4L1121.5 356.4M1116.6 346.7L1116.2 363.6M1123.4 352.7L1123 368.5M1128.7 361.2L1128.3 375.8M1137.2 358.8L1136.8 379.4M1142 365.6L1141.6 378.2M1131.1 368.5L1130.7 383M1119 373.3L1118.6 390.3M1115.4 377L1115 392.7M1111.7 381.8L1111.3 395.2M1128.7 385.4L1128.3 401.2M1120.2 380.6L1119.8 401.2M1134 391.5L1133.6 401.2M1144.4 390.3L1144 401.2M1156.6 396.4L1156.2 401.2M1162.6 398.8L1162.2 401.2" stroke="#ffff00"/>
<path d="M1112.9 388.8L1112.5 394.9M1119 388.8L1118.6 399.7M1127.5 388.8L1127.1 400.9M1134 388.8L1133.6 408.2M1144.4 388.8L1144 407M1145.7 396L1145.3 411.8M1155.8 396L1155.4 415.5M1159 399.7L1158.6 422.7M1162.6 398.5L1162.2 420.3M1154.1 405.7L1153.7 422.7M1157.3 400.9L1156.9 417.9M1139.6 419.1L1139.2 434.9M1143.7 415.4L1143.3 440.9M1148.1 422.7L1147.7 440.9M1154.1 420.3L1153.7 438.5M1141.3 425.1L1140.9 439.7M1145.7 427.6L1145.3 437.3M1134 431.2L1133.6 444.6M1127.5 433.6L1127.1 447M1119 436L1118.6 459.1M1115.4 438.5L1115 456.7M1107.4 439.7L1107 459.1M1117 439.7L1116.6 454.3M1123.8 449.4L1123.4 461.5M1128.7 447L1128.3 462.7M1094.3 456.7L1093.9 470M1100.1 457.9L1099.7 471.2M1105.7 461.5L1105.3 473.6M1111.7 461.5L1111.3 479.7M1119 463.9L1118.6 478.5M1103.2 473.6L1102.8 485.8M1108.8 473.6L1108.4 487M1129.9 466.4L1129.5 477.3M1130.6 480.9L1130.2 501.5M1149.3 479L1148.9 495.5M1145.7 488.2L1145.3 496.7M1139.6 491.8L1139.2 502.7M1143.7 494.2L1143.3 505.2M1154.1 494.2L1153.7 507.6M1160.7 495.4L1160.3 508.8M1171.8 496.7L1171.4 520.9M1179.6 499.1L1179.2 513.6M1184.4 500.3L1184 520.9M1190.5 502.7L1190.1 517.3M1195.4 500.8L1195 524.6M1199.5 513.6L1199.1 534.3M1192.9 517.3L1192.5 529.4M1196.6 517.3L1196.2 531.8" stroke="#ffff00"/>
<path d="M1177.2 525.7L1176.8 539.1M1189.3 524.5L1188.9 538.6M1201.9 522.1L1201.5 535.5M1197.8 534.7L1197.4 537.2" stroke="#ff0000"/>
<path d="M1169.4 528.2L1169 550M1166.3 530.6L1165.9 544M1177.2 541.5L1176.8 549.3M1161.4 539.1L1161 558.5M1157.3 541.5L1156.9 553.6M1163.8 546.4L1163.4 557.3M1152.4 547.6L1152 558.5M1159.2 542.7L1158.8 556.1M1109.8 553.1L1109.4 564.6M1115.4 551.2L1115 562.9M1123.8 553.6L1123.4 568.2M1132.3 550L1131.9 558.5M1139.6 548.8L1139.2 563.3M1136.4 558.5L1136 573M1131.1 560.9L1130.7 575.5M1125.8 565.7L1125.4 576.7M1140.8 560.9L1140.4 580.3M1145.2 560.9L1144.8 573M1149.3 570.6L1148.9 585.2M1154.1 573L1153.7 582.7M1159 575.4L1158.6 582.7M1144.4 582.7L1144 582.7M1132.3 582.7L1131.9 582.7M1138.4 580.3L1138 582.7M1128.7 586.4L1128.3 586.4M1134 560.9L1133.6 577.9M1138.4 565.7L1138 580.3" stroke="#ffff00"/>
<path d="M1153.5 581.2L1153.1 592.7M1157 581.2L1156.6 590.6M1160.5 581.2L1160.1 594.1M1154.9 581.2L1154.5 591.3M1158.8 581.2L1158.4 592M1149.3 581.2L1148.9 585.1M1140.9 582.6L1140.5 596.2M1143.7 581.9L1143.3 592.7M1136.8 581.2L1136.4 581.2M1131.2 584L1130.8 602.5M1128.4 586.8L1128 609.5M1125.6 591.7L1125.2 613.6M1133.3 586.8L1132.9 599.7M1129.8 585.4L1129.4 605.3M1127 589.6L1126.6 611.6M1117.5 592.3L1117.1 626.2M1110.3 595.1L1109.9 607.4M1108.2 613.3L1107.8 624.8M1095.7 606.3L1095.3 622M1099.1 604.2L1098.7 624.1M1092.9 609.1L1092.5 620.6M1097.5 605.6L1097.1 623.1M1094.3 607.7L1093.9 621.3M1124.9 616L1124.5 634.5M1128.4 618.8L1128 633.2M1134 620.2L1133.6 638.7M1136.8 624.4L1136.4 641.5M1142.3 627.2L1141.9 640.8M1127 634.2L1126.6 642.2M1126.7 617.4L1126.3 633.9M1119.3 632.8L1118.9 645.7M1116.1 636.9L1115.7 654.1M1110 632.8L1109.6 647.1M1103.3 635.6L1102.9 648.5M1097 643.2L1096.6 662.4M1099.8 648.1L1099.4 665.2M1103.3 653.7L1102.9 668M1117.5 634.9L1117.1 651.3M1098.4 645.3L1098 663.8M1101.6 650.9L1101.2 666.6M1120 656.5L1119.6 676.4M1127 659.2L1126.6 673.6M1129.8 660.6L1129.4 672.2M1118 659.2L1117.6 683.3M1128.4 659.9L1128 672.9M1118.9 657.9L1118.5 680.5M1107.5 664.8L1107.1 686.1M1111 656.5L1110.6 676.4M1114.5 664.8L1114.1 677.8M1109.2 660.6L1108.8 681.9M1112.7 660.6L1112.3 677.1M1094.3 676.7L1093.9 691.7M1101.9 676L1101.5 692.4M1105.4 682.9L1105 692.4M1103.6 678.8L1103.2 692.4" stroke="#ffff00"/>
<path d="M1094.3 689.8L1093.9 692.3M1100 688.4L1099.6 699.3M1101.8 688.4L1101.4 700.1M1103.5 688.4L1103.1 700.8M1105.2 688.4L1104.8 700.8M1107 688.4L1106.6 701.2M1108.4 688.4L1108 700.8M1114 689.8L1113.6 702.2M1119.7 689.8L1119.3 702.9M1131.6 692.6L1131.2 716.9M1135.8 698.2L1135.4 718.3M1139.3 693.3L1138.9 702.9M1140.8 703.9L1140.4 716.9M1144.3 694.7L1143.9 714.1M1148.5 699.6L1148.1 716.2M1151.3 695.4L1150.9 712M1155.5 696.8L1155.1 711.3M1159.7 697.5L1159.3 709.9M1146.4 696.8L1146 705.7M1153.4 696.1L1153 704.3M1157.6 697.1L1157.2 703.6M1142.6 695.4L1142.2 705.7M1115.4 710.9L1115 740.8M1119 707.4L1118.6 735.2M1122.5 708.1L1122.1 742.2M1117.3 708.8L1116.9 738M1120.6 707.8L1120.2 736.6M1114 713.7L1113.6 739.4M1123.9 712.3L1123.5 741.5M1128.8 720.7L1128.4 733.8M1109.8 716.5L1109.4 731M1106.3 723.5L1105.9 736.6M1102.8 726.4L1102.4 740.1M1097.9 717.2L1097.5 736.6M1095 727.8L1094.6 739.4M1104.6 725L1104.2 738M1108 719.3L1107.6 733.8M1100 725L1099.6 738M1133 732L1132.6 743.7M1137.2 732.7L1136.8 745.1M1135.1 732.3L1134.7 744.4M1145.7 733.4L1145.3 759.1M1149.2 737.6L1148.8 763.3M1152.7 747.5L1152.3 766.2M1156.2 736.9L1155.8 768.3M1159.7 750.3L1159.3 764.7M1147.4 734.8L1147 761.2M1151 741.8L1150.6 764.7M1154.4 741.8L1154 767.6M1158.1 737.6L1157.7 767.6M1162.6 739L1162.2 759.1M1166.1 741.8L1165.7 769M1169.6 741.8L1169.2 754.9M1175.2 741.8L1174.8 753.5M1164.2 739.7L1163.8 764.7M1167.9 741.8L1167.5 761.9M1175.2 758.7L1174.8 771.8M1178 764.3L1177.6 776.7M1183.7 758.7L1183.3 777.4M1189.3 760.1L1188.9 775.3M1193.5 761.5L1193.1 774.6M1197.7 761.5L1197.3 773.9M1201.2 761.5L1200.8 773.2M1191.4 760.8L1191 774.9M1195.6 761.5L1195.2 774.3M1199.4 761.5L1199 773.5" stroke="#ffff00"/>
<path d="M1169.7 505.2L1169.3 520.7M1172.5 505.7L1172.1 521.2M1180.1 500.2L1179.7 513.7M1183.6 507.2L1183.2 522.7M1182.1 503.2L1181.7 518.7M1190.6 503.2L1190.2 517.7M1193.5 511.1L1193.1 528.6M1196.5 514.1L1196.1 532.6M1199.5 515.1L1199.1 534.6M1201.5 513.1L1201.1 528.6M1195 512.1L1194.6 530.6M1198 514.6L1197.6 533.6M1167.7 529L1167.3 545.5M1170.2 527.5L1169.8 550.5M1172.5 531L1172.1 546.5M1158.3 540L1157.9 557.4M1161.2 539L1160.8 557.4M1164.2 542.9L1163.8 557.4M1159.8 539.5L1159.4 557.4M1162.7 541L1162.3 557.4M1177.1 541L1176.7 549.5M1152.5 546.4L1152.1 559.4" stroke="#ffff00"/>
<path d="M1108.2 777.5L1108.2 782.5M1113.1 777.5L1113.1 781.4" stroke="#ffff00" stroke-width="2"/>
<circle cx="1090.6" cy="774" r="1.8" fill="#ffff00" stroke="none"/>
<circle cx="1096.3" cy="775.1" r="1.1" fill="#ffff00" stroke="none"/>
<circle cx="1099.8" cy="775.9" r="1.1" fill="#ffff00" stroke="none"/>
<circle cx="1103.3" cy="776.8" r="1.1" fill="#ffff00" stroke="none"/>
<circle cx="1090.6" cy="782.5" r="1.4" fill="#ffff00" stroke="none"/>
<circle cx="1129.3" cy="782.8" r="1.3" fill="#ffff00" stroke="none"/>
<circle cx="1139.1" cy="782" r="1.1" fill="#ffff00" stroke="none"/>
<circle cx="1214.7" cy="785.4" r="1.4" fill="#ffff00" stroke="none"/>
<circle cx="1145.8" cy="784.5" r="1.4" fill="#ff0000" stroke="none"/>
</g>
<text x="106.2" y="33.5" fill="#ffff00" font-size="14.3" textLength="196" lengthAdjust="spacingAndGlyphs">10410 13.12.25 12 UTC Essen</text>
<text x="455.9" y="795.5" fill="#ffff00" font-size="10" font-weight="bold">A</text>
<path d="M451.5 783.6L454.2 779.6L457.6 784.4" stroke="#2020ff" stroke-width="1.1" fill="none"/>
<text x="23.4" y="818.6" fill="#000" font-size="10.6" font-weight="bold" style="font-family:'Liberation Mono',monospace" textLength="195" lengthAdjust="spacingAndGlyphs">10410 13.12.25 12 UTC Essen</text>
<g transform="translate(10 24) scale(0.09217)">
<g fill="#0000ff" stroke="none">
<path d="M250 128L262 112L532 108L532 124L318 150L288 172L272 312L250 312Z"/>
<path d="M646 305L663 305L663 532L640 550L400 574L400 558L606 526L634 496L644 400Z"/>
<path d="M368 730L420 712L640 690L655 610L668 604L708 700L708 740L364 747Z"/>
<path d="M455 640L475 636L450 700L430 704ZM505 634L525 630L500 694L480 698ZM553 628L573 624L548 688L528 692ZM600 620L622 616L597 682L577 686Z" opacity="0.85"/>
<path d="M452 648L660 612L664 628L446 664Z" opacity="0.55"/>
</g>
<g fill="none" stroke="#00ff00" stroke-width="19" stroke-linejoin="round" stroke-linecap="round">
<path d="M690 64L650 74L612 66L590 82L574 122L545 156L480 182L440 206L415 246L396 300L400 322"/>
<path d="M692 78L666 112L650 152L640 202L625 262L600 312L560 346L500 366L455 386L440 402L420 452L390 502L350 546L300 560L250 572L215 592L190 642L176 686L140 692L120 652L150 612L185 562L215 532L250 516L290 496L310 470L330 422"/>
<path d="M366 326L300 336L250 366L215 402L185 452L150 492L100 506L66 512L56 536L80 580L110 562L170 542L215 502L245 456L275 442L320 432L350 402L402 366"/>
<path d="M692 82L740 62L780 56L776 86L722 122L690 150"/>
<path d="M700 172L760 142L815 116L840 142L790 186L732 226L692 236"/>
<path d="M690 198L742 182L800 142"/>
</g>
</g>

</svg></body></html>
